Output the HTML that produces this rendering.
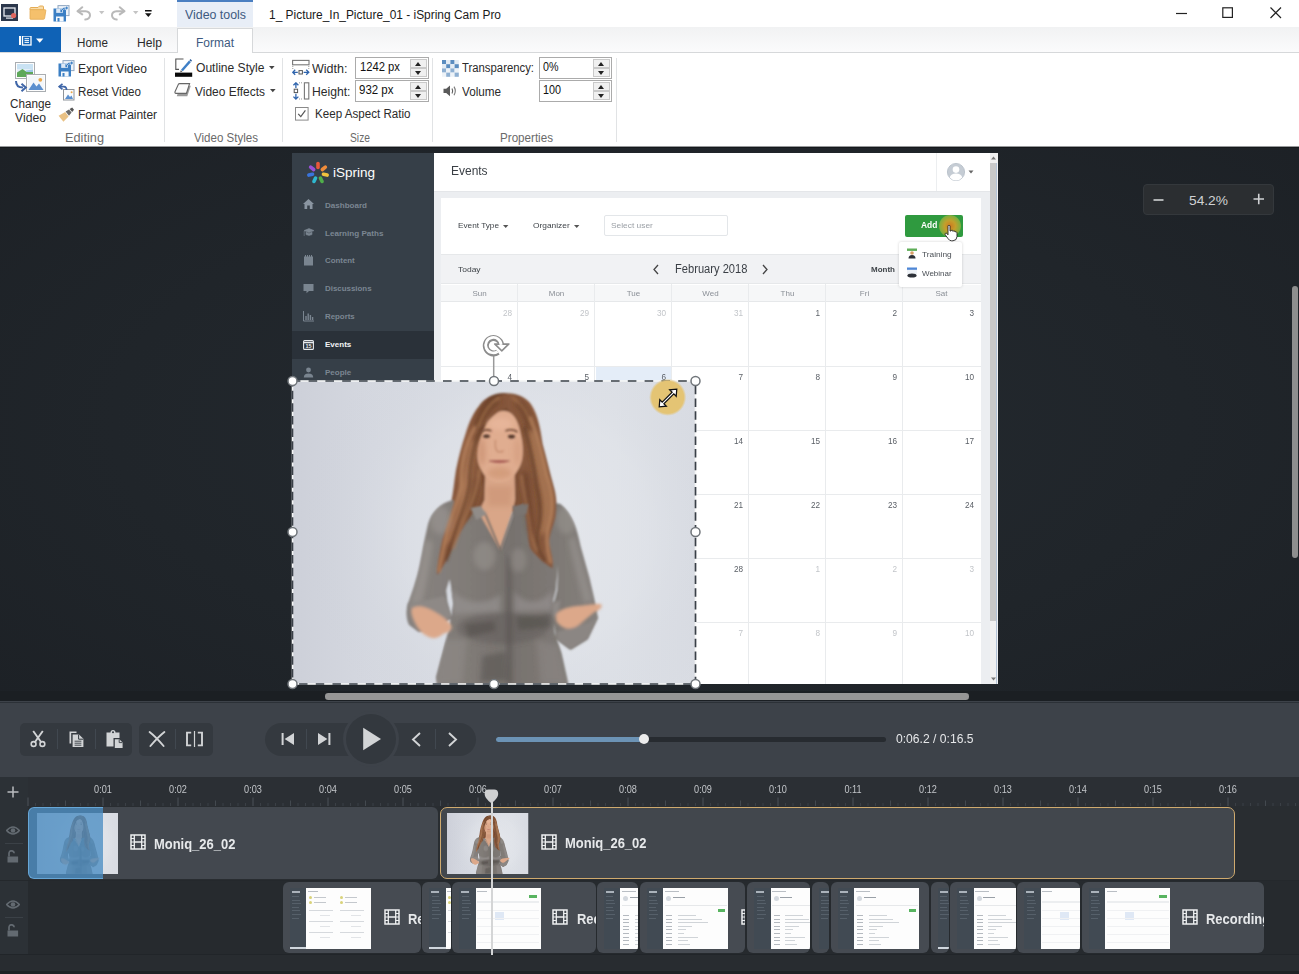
<!DOCTYPE html>
<html>
<head>
<meta charset="utf-8">
<title>iSpring Cam Pro</title>
<style>
*{box-sizing:border-box;margin:0;padding:0}
html,body{width:1299px;height:974px;overflow:hidden;background:#1f2328;font-family:"Liberation Sans",sans-serif;}
body{position:relative}
.abs{position:absolute}
.t{position:absolute;white-space:nowrap;line-height:1;transform-origin:0 50%}
/* ---------- title bar ---------- */
#title{position:absolute;left:0;top:0;width:1299px;height:27px;background:#fff}
#tabs{position:absolute;left:0;top:27px;width:1299px;height:26px;background:linear-gradient(#f1f2f3,#fbfbfc);border-bottom:1px solid #d6d8da}
#ribbon{position:absolute;left:0;top:53px;width:1299px;height:94px;background:#fff;border-bottom:1px solid #97999b}
.rt{font-size:12px;color:#2b2b2b}
.gl{font-size:12px;color:#6a6a6a}
.sep{position:absolute;top:58px;width:1px;height:84px;background:#e1e3e5}
.inp{position:absolute;height:22px;border:1px solid #ababab;background:#fff}
.spin{position:absolute;right:1px;top:1px;width:17px;height:18px}
.spin i{position:absolute;left:0;width:17px;height:9px;border:1px solid #c9c9c9;background:#f0f0f0}
.spin i:after{content:"";position:absolute;left:4px;top:2px;border:3.5px solid transparent}
.spin i.u{top:0}.spin i.u:after{border-bottom:4px solid #222;border-top:0}
.spin i.d{top:9px}.spin i.d:after{border-top:4px solid #222;border-bottom:0;top:2px}
/* ---------- stage ---------- */
#stage{position:absolute;left:0;top:147px;width:1299px;height:554px;background:radial-gradient(ellipse 75% 80% at 50% 50%,#242a30 0%,#20252a 55%,#1c2025 100%);overflow:hidden}

#pg{position:absolute;left:0;top:-147px;width:1299px;height:974px}
#vid{position:absolute;left:292px;top:153px;width:706px;height:531px;background:#fff;overflow:hidden}
#vin{position:absolute;left:-292px;top:-153px;width:1299px;height:974px;filter:blur(.55px)}
.sb{position:absolute;left:292px;top:153px;width:141.5px;height:531px;background:#363f48}
.mi{font-size:7.4px;font-weight:bold;color:#7b8692}
.cal{font-size:8px;color:#555}
.dn{font-size:8px;color:#8a8f96}
.dt{font-size:8.2px;color:#5a5f66;text-align:right;margin-left:-.5px}
.dt.o{color:#c2c5c9}
.vl{position:absolute;width:1px;background:#e9ebed;top:284px;height:400px}
.hl{position:absolute;height:1px;background:#e9ebed;left:441px;width:540px}
/* ---------- player ---------- */
#player{position:absolute;left:0;top:701px;width:1299px;height:76px;background:#3d4249}
#tl{position:absolute;left:0;top:777px;width:1299px;height:197px;background:#2a2e33}

.grp{position:absolute;top:20.5px;height:33px;background:#34393f;border-radius:5px}
.gdv{position:absolute;top:27px;width:1px;height:20px;background:#414850}
.ic{fill:none;stroke:#d2d4d6}
.rl{position:absolute;top:6.5px;font-size:10.5px;color:#c3c6ca;transform:scaleX(.87);width:40px;text-align:center;line-height:1;white-space:nowrap}
.clip{position:absolute;background:#464b52;border-radius:6px;overflow:hidden}
.c2{top:105px;height:71px}
.cn{transform:scaleX(.926);position:absolute;font-size:14px;font-weight:bold;color:#e6e8ea;white-space:nowrap;line-height:1;transform-origin:0 50%}
</style>
</head>
<body>
<svg width="0" height="0" style="position:absolute;left:-10px;top:-10px"><defs>
<filter id="b1" x="-10%" y="-10%" width="120%" height="120%"><feGaussianBlur stdDeviation=".9"/></filter>
<filter id="b2" x="-30%" y="-30%" width="160%" height="160%"><feGaussianBlur stdDeviation="2.6"/></filter>
<filter id="b3" x="-30%" y="-30%" width="160%" height="160%"><feGaussianBlur stdDeviation="1.5"/></filter>
<linearGradient id="hairg" x1="0" y1="0" x2="1" y2="0"><stop offset="0" stop-color="#7c4f36"/><stop offset=".25" stop-color="#8f5d40"/><stop offset=".5" stop-color="#6b432d"/><stop offset=".8" stop-color="#8d5c3f"/><stop offset="1" stop-color="#7d5037"/></linearGradient>
<linearGradient id="shirtg" x1="0" y1="0" x2="1" y2="0"><stop offset="0" stop-color="#888380"/><stop offset=".3" stop-color="#817c78"/><stop offset=".55" stop-color="#77726e"/><stop offset="1" stop-color="#85807c"/></linearGradient>
<linearGradient id="pbg" x1="0" y1="0" x2="1" y2="0"><stop offset="0" stop-color="#cdd0d9"/><stop offset=".2" stop-color="#d5d8e0"/><stop offset=".55" stop-color="#dcdfe6"/><stop offset=".8" stop-color="#dee1e7"/><stop offset="1" stop-color="#d9dce3"/></linearGradient><radialGradient id="pbg2" cx=".58" cy=".5" r=".5" gradientTransform="translate(.58 .5) scale(1.1 1.5) translate(-.58 -.5)"><stop offset="0" stop-color="#e8eaee" stop-opacity=".8"/><stop offset=".55" stop-color="#e2e5ea" stop-opacity=".4"/><stop offset="1" stop-color="#c8cdd6" stop-opacity="0"/></radialGradient><clipPath id="bodyclip"><path d="M506 393.2 C494 392 484 398 478.5 406 C472 414 468 424 465 434 C461 446 458 458 455.5 470 C453.5 482 453 492 450.5 503 C448 514 444 524 441.5 534 C439 546 436.5 560 436 576 C441 570 446 562 450 552 C455 540 462 528 468 520 L480 512 L524 512 C526 520 526 536 528 546 C534 556 544 564 552 569 C553 560 550 552 548.5 544 C548 536 552 528 555 518 C557 508 556 496 553 486 C549 472 546 458 542 444 C540 430 538 416 531 405 C526 397 516 393 506 393.2Z"/><path d="M470 506 L452 500 C440 503 431 512 427.5 524 C424 538 422 552 419 566 C416 580 411 594 407 605 C405 612 406 620 408.5 625 L418 632 L436 628 L451 618 L447 602 L446 590 L449 580 L452.5 604 L447.5 632 L442 653 L435.5 677 L436.5 686 L568 686 L567 680 L561 653 L554 632 L552 604 L555.5 590 L557.5 564 L556 590 L552 604 L552.5 618 L556 639 L570 649.5 L587 639 L597.5 618 L594.5 602 L589 578 L580 546 C577 530 572 514 560 504 L530 498 L514 510 L500 550 L484 512Z"/><path d="M485 468 L484 500 L478 512 L499.8 550 L512 512 L514.5 500 L514 468Z"/><path d="M503 411 C494 411 487 418 484.5 427 C480 436 476.5 446 477 456 C477.5 464 480 470 484 475 C488 480 493 482.5 498 482.5 C505 482.5 510 480 514 475 C518 470 521 464 522 456 C523 446 521 436 518.6 427 C516 418 512 411 503 411Z"/><path d="M507 394 C496 395 486 404 481 416 C476 428 472 440 468 452 C465 462 460 472 457 482 C455 492 455 500 452 510 C450 520 445 530 442 540 C439 552 437 564 436.5 575 C442 568 448 558 452 548 C457 536 463 526 469 518 C474 511 479 505 481 497 C483 488 481 478 478.5 470 C476 462 476 452 478 444 C480 434 484 426 489 420 C494 414 500 410 506 408Z"/><path d="M507 394 C516 394 526 400 531 410 C536 420 538 432 540 444 C543 458 547 472 551 484 C555 496 557 508 555 518 C552 528 548 536 548.5 544 C550 552 553 560 552 568.5 C545 564 536 557 530 549 C527 542 528 530 526 518 C525 508 522 498 520 490 C518 480 520 470 522 460 C524 448 522 436 519 427 C516 418 511 412 506 408Z"/></clipPath><symbol id="wm" viewBox="292.5 381 403 303" preserveAspectRatio="none"><rect x="292.5" y="381" width="403" height="303" fill="url(#pbg)"/><rect x="292.5" y="381" width="403" height="303" fill="url(#pbg2)"/>
<g filter="url(#b1)">
<!-- hair back mass -->
<path d="M506 393.2 C494 392 484 398 478.5 406 C472 414 468 424 465 434 C461 446 458 458 455.5 470 C453.5 482 453 492 450.5 503 C448 514 444 524 441.5 534 C439 546 436.5 560 436 576 C441 570 446 562 450 552 C455 540 462 528 468 520 L480 512 L524 512 C526 520 526 536 528 546 C534 556 544 564 552 569 C553 560 550 552 548.5 544 C548 536 552 528 555 518 C557 508 556 496 553 486 C549 472 546 458 542 444 C540 430 538 416 531 405 C526 397 516 393 506 393.2Z" fill="url(#hairg)"/>
<!-- shirt: torso + arms -->
<path d="M470 506 L452 500 C440 503 431 512 427.5 524 C424 538 422 552 419 566 C416 580 411 594 407 605 C405 612 406 620 408.5 625 L418 632 L436 628 L451 618 L447 602 L446 590 L449 580 L452.5 604 L447.5 632 L442 653 L435.5 677 L436.5 686 L568 686 L567 680 L561 653 L554 632 L552 604 L555.5 590 L557.5 564 L556 590 L552 604 L552.5 618 L556 639 L570 649.5 L587 639 L597.5 618 L594.5 602 L589 578 L580 546 C577 530 572 514 560 504 L530 498 L514 510 L500 550 L484 512Z" fill="url(#shirtg)"/>
<!-- gap between arms & torso shows bg -->
<path d="M446.2 590 L449.2 579.5 L452.6 604 L450.5 616 L447 603Z" fill="#d6d9e0"/>
<path d="M555.6 590 L557.6 566 L556.6 590 L553 603.5 L552.6 600Z" fill="#dcdfe5"/>
<!-- neck / chest -->
<path d="M485 468 L484 500 L478 512 L499.8 550 L512 512 L514.5 500 L514 468Z" fill="#d9a688"/>
<!-- face -->
<path d="M503 411 C494 411 487 418 484.5 427 C480 436 476.5 446 477 456 C477.5 464 480 470 484 475 C488 480 493 482.5 498 482.5 C505 482.5 510 480 514 475 C518 470 521 464 522 456 C523 446 521 436 518.6 427 C516 418 512 411 503 411Z" fill="#e0ad90"/>
<!-- hair framing: left side over forehead & down -->
<path d="M507 394 C496 395 486 404 481 416 C476 428 472 440 468 452 C465 462 460 472 457 482 C455 492 455 500 452 510 C450 520 445 530 442 540 C439 552 437 564 436.5 575 C442 568 448 558 452 548 C457 536 463 526 469 518 C474 511 479 505 481 497 C483 488 481 478 478.5 470 C476 462 476 452 478 444 C480 434 484 426 489 420 C494 414 500 410 506 408Z" fill="#85563b"/>
<!-- hair right side -->
<path d="M507 394 C516 394 526 400 531 410 C536 420 538 432 540 444 C543 458 547 472 551 484 C555 496 557 508 555 518 C552 528 548 536 548.5 544 C550 552 553 560 552 568.5 C545 564 536 557 530 549 C527 542 528 530 526 518 C525 508 522 498 520 490 C518 480 520 470 522 460 C524 448 522 436 519 427 C516 418 511 412 506 408Z" fill="#87583c"/>
</g>
<g clip-path="url(#bodyclip)"><g filter="url(#b2)">
<!-- hair highlights / shadows -->
<path d="M470 440 C465 460 460 480 458 500 C455 516 448 530 444 546 L452 540 C458 524 464 512 468 498 C472 480 472 460 476 442Z" fill="#b07c58" opacity=".8"/>
<path d="M534 430 C540 452 546 474 550 492 C553 506 550 520 546 532 L538 536 C542 520 544 506 540 490 C536 472 530 452 528 432Z" fill="#ad7a56" opacity=".8"/>
<path d="M492 398 C484 404 478 414 474 426 L482 424 C486 414 492 406 500 402Z" fill="#6a4029" opacity=".9"/>
<path d="M520 400 C528 408 532 420 534 432 L526 428 C524 418 520 410 514 404Z" fill="#6a4029" opacity=".7"/>
<path d="M522 470 C522 490 526 510 528 530 L534 540 C534 520 530 496 528 474Z" fill="#6b412a" opacity=".8"/>
<path d="M478 478 C478 494 474 508 468 518 L462 522 C468 508 472 494 474 478Z" fill="#6b412a" opacity=".7"/>
<!-- shirt folds -->
<path d="M507 556 L509.6 556 L510.6 684 L507.4 684Z" fill="#4e4a47" opacity=".75"/>
<path d="M464 624 L494 621 L495 631 L468 637Z" fill="#4d4946" opacity=".6"/>
<path d="M516 617 L550 614 L551 627 L518 630Z" fill="#504c49" opacity=".6"/>
<path d="M482 656 L505 652 L506 680 L480 682Z" fill="#56524f" opacity=".55"/>
<path d="M452 590 C462 604 486 606 500 594 L500 612 L452 614Z" fill="#969190" opacity=".7"/>
<path d="M514 592 C526 606 542 604 552 590 L552 610 L514 612Z" fill="#969190" opacity=".65"/>
<path d="M440 640 L466 640 L462 684 L436 684Z" fill="#8f8a87" opacity=".6"/>
<path d="M536 640 L558 646 L566 684 L540 684Z" fill="#8f8a87" opacity=".5"/>
<path d="M424 540 C422 560 416 584 410 604 L420 606 C426 586 430 562 432 542Z" fill="#9a9592" opacity=".7"/>
<path d="M574 536 C580 556 586 580 592 600 L584 604 C578 584 572 560 568 540Z" fill="#9a9592" opacity=".6"/>
<ellipse cx="502" cy="628" rx="46" ry="16" fill="#55514e" opacity=".35"/>
<ellipse cx="484" cy="556" rx="11" ry="14" fill="#a09b97" opacity=".45"/>
<ellipse cx="518" cy="560" rx="8" ry="12" fill="#a09b97" opacity=".4"/>
<ellipse cx="440" cy="520" rx="10" ry="14" fill="#a09b97" opacity=".5"/>
<ellipse cx="566" cy="520" rx="10" ry="14" fill="#a09b97" opacity=".45"/>
<!-- face shading -->
<ellipse cx="499" cy="473" rx="12" ry="6" fill="#cf9878" opacity=".8"/>
<ellipse cx="481.5" cy="452" rx="3.5" ry="14" fill="#c88f70" opacity=".7"/>
<ellipse cx="517" cy="452" rx="3.5" ry="14" fill="#d09a7c" opacity=".6"/>
<ellipse cx="500" cy="424" rx="12" ry="6" fill="#e8b89c" opacity=".8"/>
<path d="M486 486 L512 486 L510 506 L488 506Z" fill="#cc9676" opacity=".7"/>
</g></g>
<g filter="url(#b3)">
<!-- cuffs -->
<path d="M407.5 604 L444 596 L451 616 L438 626 L412 614Z" fill="#8e8986"/>
<path d="M552 604 L560 600 L558 612 L553 618Z" fill="#8e8986"/>
<path d="M556 632 L590 622 L597 616 L587 639 L570 649.5 L557 640Z" fill="#8b8683"/>
<!-- hands -->
<path d="M411.5 608.5 C416 604.5 424 606 432 610.5 C440 615 448 620 451 626 C452 630 448 633 443 633.5 C440 637 434 639.5 430 637.5 C424 636 418 630 415 624 C412 618 409.5 612 411.5 608.5Z" fill="#dca88a"/>
<path d="M555.5 615 C558 610 566 607 576 606 C586 605 594 603.5 600 604 C603 606 600 610 594 612 C590 615 586 619 582 622 C578 626 572 629 567 628.5 C562 628 557 624 555.5 620Z" fill="#dca88a"/>
</g>
<g clip-path="url(#bodyclip)"><g filter="url(#b3)" fill="none" stroke-linecap="round">
<path d="M474 428 C463 448 460 468 461 486 C458 500 451 515 447 530 C444 545 440 560 438.5 571" stroke="#b98660" stroke-width="3.6" opacity=".75"/>
<path d="M482 426 C472 446 469 466 469 484 C467 500 460 514 456 528 C452 540 448 552 446 560" stroke="#603b28" stroke-width="3.2" opacity=".6"/>
<path d="M479 470 C477 486 473 500 467 512 C461 524 457 536 453 548" stroke="#ad7b55" stroke-width="2.6" opacity=".7"/>
<path d="M530 418 C538 438 542 458 546 476 C552 492 553 508 549 522 C545 534 546 548 550 562" stroke="#b98660" stroke-width="3.6" opacity=".75"/>
<path d="M524 428 C530 448 534 468 536 486 C540 502 541 518 537 532 C535 542 538 552 544 560" stroke="#603b28" stroke-width="3.2" opacity=".6"/>
<path d="M521 476 C523 492 527 508 529 524 C530 534 532 542 536 550" stroke="#ad7b55" stroke-width="2.4" opacity=".6"/>
<path d="M498 398 C488 404 482 414 478 426" stroke="#a8764f" stroke-width="2.6" opacity=".7"/>
<path d="M512 398 C522 404 528 414 531 426" stroke="#a8764f" stroke-width="2.4" opacity=".6"/>
</g></g>
<g filter="url(#b1)">
<!-- eyes / brows / nose / mouth -->
<path d="M481 431.5 Q485.5 428.5 491 431" fill="none" stroke="#6a4430" stroke-width="1.6"/>
<path d="M505 431 Q511 428 517 432" fill="none" stroke="#6a4430" stroke-width="1.6"/>
<ellipse cx="486" cy="436.2" rx="3.4" ry="1.7" fill="#4b3327"/>
<ellipse cx="511" cy="436.6" rx="3.6" ry="1.8" fill="#4b3327"/>
<path d="M495 440 Q494 449 497 451.5 Q500 452.5 503 451" fill="none" stroke="#c58d70" stroke-width="1.4"/>
<path d="M488.5 461 Q498.5 459 509 461 Q499 465.5 488.5 461Z" fill="#b86c62"/>
<path d="M488.5 461 Q498.5 462 509 461" fill="none" stroke="#8a4a44" stroke-width=".8"/>
<path d="M484 512 L499.8 550 L513 512" fill="none" stroke="#6e6965" stroke-width="1.6"/>
<path d="M470 508 L480 506 L486 514 L476 520Z" fill="#918c88"/>
<path d="M512 506 L528 504 L526 514 L514 516Z" fill="#7a7571"/>
</g>
</symbol></defs></svg>
<div id="title">
<!-- app icon -->
<svg class="abs" style="left:1px;top:4px" width="18" height="18" viewBox="0 0 18 18"><rect width="17" height="17" fill="#2c384c"/><rect x="3" y="4" width="11" height="8" fill="none" stroke="#e8ecf2" stroke-width="1.3"/><rect x="5" y="13.5" width="7" height="1.2" fill="#e8ecf2"/><circle cx="12.6" cy="11.6" r="2.6" fill="#e0665e"/></svg>
<!-- folder -->
<svg class="abs" style="left:29px;top:5px" width="18" height="16" viewBox="0 0 18 16"><path d="M1 3.5 Q1 2.5 2 2.5 L9 2.5 L10.5 1 L13.5 1 Q14.5 1 14.5 2 L14.5 5 L1 5Z" fill="#f9dca8" stroke="#e5ac55" stroke-width="1"/><path d="M1 14 L1 5.5 Q1 4.7 2 4.7 L16 4.7 Q17 4.7 16.8 5.7 L15.6 13.3 Q15.4 14.3 14.4 14.3 L1.5 14.3Z" fill="#f5c06c" stroke="#e5ac55" stroke-width=".8"/></svg>
<!-- save -->
<svg class="abs" style="left:53px;top:5px" width="17" height="17" viewBox="0 0 17 17"><rect x="5" y=".6" width="11" height="10" fill="#eef3f9" stroke="#8fa6c0" stroke-width="1"/><path d="M.5 3.5 L11.5 3.5 L13 5 L13 16.5 L.5 16.5Z" fill="#3b7fc4"/><rect x="3.2" y="3.5" width="6.6" height="4.4" fill="#dce8f5"/><rect x="7.4" y="4.2" width="1.6" height="3" fill="#3b7fc4"/><rect x="3" y="11.5" width="7.6" height="5" fill="#f4f8fc"/><rect x="4.5" y="13" width="2" height="3.5" fill="#3b7fc4"/><path d="M8.5 4.5 Q10 1.8 13 2.2 L13 .8 L15.6 3 L13 5.2 L13 3.8 Q10.5 3.5 9.6 5.5Z" fill="#3b7fc4" stroke="#eef3f9" stroke-width=".5"/></svg>
<!-- undo -->
<svg class="abs" style="left:76px;top:6px" width="16" height="15" viewBox="0 0 16 15"><path d="M6.2 1.2 L1.5 5.2 L6.2 8.4" fill="none" stroke="#b9b9b9" stroke-width="2" stroke-linecap="round" stroke-linejoin="round"/><path d="M2.2 5.2 L9.5 5.2 Q14 5.6 14 9.3 Q14 13 9.3 13.6" fill="none" stroke="#b9b9b9" stroke-width="2" stroke-linecap="round"/></svg>
<svg class="abs" style="left:99px;top:11px" width="6" height="4" viewBox="0 0 6 4"><path d="M0 0 L5.4 0 L2.7 3.2Z" fill="#c4c4c4"/></svg>
<!-- redo -->
<svg class="abs" style="left:110px;top:6px" width="16" height="15" viewBox="0 0 16 15"><g transform="translate(16,0) scale(-1,1)"><path d="M6.2 1.2 L1.5 5.2 L6.2 8.4" fill="none" stroke="#b9b9b9" stroke-width="2" stroke-linecap="round" stroke-linejoin="round"/><path d="M2.2 5.2 L9.5 5.2 Q14 5.6 14 9.3 Q14 13 9.3 13.6" fill="none" stroke="#b9b9b9" stroke-width="2" stroke-linecap="round"/></g></svg>
<svg class="abs" style="left:133px;top:11px" width="6" height="4" viewBox="0 0 6 4"><path d="M0 0 L5.4 0 L2.7 3.2Z" fill="#c4c4c4"/></svg>
<!-- customize -->
<svg class="abs" style="left:145px;top:10px" width="7" height="8" viewBox="0 0 7 8"><rect x="0" y="0" width="6.6" height="1.5" fill="#111"/><path d="M0 3.2 L6.6 3.2 L3.3 7Z" fill="#111"/></svg>
<!-- video tools context tab -->
<div class="abs" style="left:177px;top:0;width:76px;height:28px;background:#e8eef7;border-top:2px solid #4a7fc1"></div>
<span class="t" id="t_vt" style="transform:scaleX(0.990);left:185px;top:9.25px;font-size:12.5px;color:#3d5a80">Video tools</span>
<span class="t" id="t_ttl" style="transform:scaleX(0.954);left:269px;top:9.25px;font-size:12.5px;color:#1a1a1a">1_ Picture_In_Picture_01 - iSpring Cam Pro</span>
<!-- window buttons -->
<svg class="abs" style="left:1176px;top:7px" width="12" height="12" viewBox="0 0 12 12"><path d="M0 6.5 L11 6.5" stroke="#222" stroke-width="1.2"/></svg>
<svg class="abs" style="left:1222px;top:7px" width="12" height="12" viewBox="0 0 12 12"><rect x=".8" y=".8" width="9.6" height="9.6" fill="none" stroke="#222" stroke-width="1.2"/></svg>
<svg class="abs" style="left:1270px;top:7px" width="12" height="12" viewBox="0 0 12 12"><path d="M.5 .5 L11 11 M11 .5 L.5 11" stroke="#222" stroke-width="1.2"/></svg>
</div>
<div id="tabs">
<div class="abs" style="left:0;top:0;width:61px;height:25px;background:#0f62b6"></div>
<svg class="abs" style="left:19px;top:9px" width="26" height="10" viewBox="0 0 26 10"><rect x="0" y="0" width="2" height="9" fill="#fff"/><rect x="3.5" y="0" width="8.5" height="9" fill="none" stroke="#fff" stroke-width="1.3"/><path d="M5.5 2.7 H10 M5.5 4.6 H10 M5.5 6.4 H10" stroke="#fff" stroke-width="1"/><path d="M17 2.6 L24.4 2.6 L20.7 6.8Z" fill="#fff"/></svg>
<span class="t rt" id="t_home" style="transform:scaleX(0.930);left:77px;top:9.50px;font-size:12.5px">Home</span>
<span class="t rt" id="t_help" style="transform:scaleX(0.972);left:137px;top:9.50px;font-size:12.5px">Help</span>
<div class="abs" style="left:177px;top:1px;width:76px;height:26px;background:#fff;border:1px solid #d6d8da;border-bottom:0"></div>
<span class="t" id="t_fmt" style="transform:scaleX(0.960);left:196px;top:9.50px;font-size:12.5px;color:#3d5a80">Format</span>
</div>
<div id="ribbon">
<svg class="abs" style="left:14px;top:7.5px" width="34" height="34" viewBox="0 0 34 34">
<rect x="1.5" y="1.5" width="19" height="16" fill="#fdfdfd" stroke="#a9adb1" stroke-width="1"/><rect x="3" y="3" width="16" height="13" fill="#e3eef7"/><path d="M3 16 L3 11.5 L8.5 8 L12 10.5 L19 9 L19 16Z" fill="#5ea85a"/><path d="M3 8 L19 8 L19 3 L3 3Z" fill="#c9e2f3"/><path d="M12 9.5 L19 8.6 L19 11 L12 11Z" fill="#9fc7e6"/>
<rect x="12.5" y="13.5" width="19" height="17" fill="#fdfdfd" stroke="#a9adb1" stroke-width="1"/><rect x="14" y="15" width="16" height="14" fill="#f4f7fa"/><path d="M14.5 29 L19.5 21.5 L22.5 25.5 L25 22.5 L29.5 29Z" fill="#5b8fce"/><circle cx="26.3" cy="18.8" r="1.9" fill="#eaa84a"/>
<path d="M2 20 Q2 26.5 9 26.5" fill="none" stroke="#3f66a8" stroke-width="2"/><path d="M7.5 22.8 L11.8 26.5 L7.5 30.2" fill="none" stroke="#3f66a8" stroke-width="2"/>
</svg>
<span class="t rt" id="t_change" style="transform:scaleX(0.936);left:10px;top:45.45px;font-size:12.5px;">Change</span>
<span class="t rt" id="t_video" style="transform:scaleX(0.976);left:15px;top:58.95px;font-size:12.5px;">Video</span>
<svg class="abs" style="left:58px;top:7px" width="17" height="17" viewBox="0 0 17 17"><rect x="5" y=".6" width="11" height="10" fill="#eef3f9" stroke="#8fa6c0" stroke-width="1"/><path d="M.5 3.5 L11.5 3.5 L13 5 L13 16.5 L.5 16.5Z" fill="#3b7fc4"/><rect x="3.2" y="3.5" width="6.6" height="4.4" fill="#dce8f5"/><rect x="7.4" y="4.2" width="1.6" height="3" fill="#3b7fc4"/><rect x="3" y="11.5" width="7.6" height="5" fill="#f4f8fc"/><rect x="4.5" y="13" width="2" height="3.5" fill="#3b7fc4"/><path d="M8.5 4.5 Q10 1.8 13 2.2 L13 .8 L15.6 3 L13 5.2 L13 3.8 Q10.5 3.5 9.6 5.5Z" fill="#3b7fc4" stroke="#eef3f9" stroke-width=".5"/></svg>
<span class="t rt" id="t_export" style="transform:scaleX(0.967);left:78px;top:9.95px;font-size:12.5px;">Export Video</span>
<svg class="abs" style="left:58px;top:30px" width="17" height="18" viewBox="0 0 17 18"><rect x="5.5" y="6.5" width="10.5" height="10.5" fill="#fbfcfd" stroke="#8e9399" stroke-width="1"/><path d="M7 16 L10 11.5 L12 14 L13.5 12.5 L15 16Z" fill="#5b8fce"/><circle cx="13.6" cy="9.2" r="1" fill="#eaa84a"/><path d="M4.5 .8 L1.2 3.6 L4.5 6.4" fill="none" stroke="#3f66a8" stroke-width="1.6"/><path d="M1.6 3.6 L6 3.6 Q8.6 3.8 8.6 7" fill="none" stroke="#3f66a8" stroke-width="1.6"/></svg>
<span class="t rt" id="t_reset" style="transform:scaleX(0.928);left:78px;top:33.20px;font-size:12.5px;">Reset Video</span>
<svg class="abs" style="left:58px;top:53.5px" width="18" height="17" viewBox="0 0 18 17"><path d="M.6 8.8 L7.2 5 L10.6 9.4 L5.4 14.8Z" fill="#e9c184"/><path d="M7.6 4.4 L11 2.4 L13.6 5.6 L11 8.8Z" fill="#6b6b6b"/><path d="M11.6 1.9 L14.2 .4 L16 2.8 L14.2 5Z" fill="#555"/></svg>
<span class="t rt" id="t_painter" style="transform:scaleX(0.956);left:78px;top:56.20px;font-size:12.5px;">Format Painter</span>
<span class="t gl" id="t_editing" style="transform:scaleX(1.020);left:65px;top:78.80px;font-size:12.5px;">Editing</span>
<div class="sep" style="left:164px;top:5px"></div>
<svg class="abs" style="left:175px;top:5px" width="18" height="19" viewBox="0 0 18 19"><path d="M8.5 1 L.8 1 L.8 11.4 L4 11.4" fill="none" stroke="#555" stroke-width="1.1"/><path d="M6 11.8 L14 2.6 L15.8 4.2 L7.8 13.2Z" fill="#3f7fc6"/><path d="M14.4 2.2 L15.4 1.1 L17 2.6 L16.1 3.7Z" fill="#2f5f9a"/><path d="M5.8 12.2 L5.2 14.2 L7.4 13.5Z" fill="#444"/><rect x="0" y="14.6" width="17.2" height="4.2" fill="#0a0a0a"/></svg>
<span class="t rt" id="t_outline" style="transform:scaleX(0.966);left:195.5px;top:9.45px;font-size:12.5px;">Outline Style</span>
<svg class="abs" style="left:269px;top:13px" width="6" height="4" viewBox="0 0 6 4"><path d="M0 0 L5.6 0 L2.8 3.2Z" fill="#444"/></svg>
<svg class="abs" style="left:174px;top:30px" width="18" height="14" viewBox="0 0 18 14"><path d="M5.5 2 L16 2 L12.5 12.5 L2 12.5Z" fill="#9a9a9a" transform="translate(.8,.8)"/><path d="M4.5 1 Q5 .6 5.6 .6 L15.6 .6 L12.4 10.4 L2 10.4 Q.6 10.2 1 8.8Z" fill="#fcfcfc" stroke="#666" stroke-width="1.1"/></svg>
<span class="t rt" id="t_effects" style="transform:scaleX(0.956);left:195px;top:32.95px;font-size:12.5px;">Video Effects</span>
<svg class="abs" style="left:270px;top:36px" width="6" height="4" viewBox="0 0 6 4"><path d="M0 0 L5.6 0 L2.8 3.2Z" fill="#444"/></svg>
<span class="t gl" id="t_vstyles" style="transform:scaleX(0.924);left:193.5px;top:78.80px;font-size:12.5px;">Video Styles</span>
<div class="sep" style="left:282px;top:5px"></div>
<svg class="abs" style="left:292px;top:6px" width="18" height="18" viewBox="0 0 18 18"><rect x=".6" y="1.4" width="16.4" height="4.4" fill="#fff" stroke="#777" stroke-width="1.1"/><path d="M.8 7 V11 M16.8 7 V11" stroke="#999" stroke-width="1" stroke-dasharray="1 1"/><rect x="7" y="11.6" width="3.4" height="3.4" fill="#fff" stroke="#555" stroke-width="1"/><path d="M5.8 13.3 H.8 M3.2 10.8 L.8 13.3 L3.2 15.8 M11.6 13.3 H16.8 M14.2 10.8 L16.8 13.3 L14.2 15.8" fill="none" stroke="#2f64ad" stroke-width="1.3"/></svg>
<span class="t rt" id="t_width" style="transform:scaleX(1.002);left:312px;top:9.50px;font-size:12.5px;">Width:</span>
<svg class="abs" style="left:292px;top:29px" width="18" height="18" viewBox="0 0 18 18"><rect x="12.4" y=".8" width="4.4" height="16.2" fill="#fff" stroke="#777" stroke-width="1.1"/><path d="M7 .8 H11 M7 17 H11" stroke="#999" stroke-width="1" stroke-dasharray="1 1"/><rect x="2.2" y="7.2" width="3.4" height="3.4" fill="#fff" stroke="#555" stroke-width="1"/><path d="M3.9 6 V.8 M1.4 3.2 L3.9 .8 L6.4 3.2 M3.9 11.8 V17 M1.4 14.6 L3.9 17 L6.4 14.6" fill="none" stroke="#2f64ad" stroke-width="1.3"/></svg>
<span class="t rt" id="t_height" style="transform:scaleX(0.972);left:312px;top:32.50px;font-size:12.5px;">Height:</span>
<div class="inp" style="left:355px;top:4px;width:74px"><span class="t" id="t_w" style="transform:scaleX(0.899);left:3.5px;top:2.50px;font-size:12.5px;color:#111">1242 px</span><div class="spin"><i class="u"></i><i class="d"></i></div></div>
<div class="inp" style="left:355px;top:27px;width:74px"><span class="t" id="t_h" style="transform:scaleX(0.919);left:3px;top:2.50px;font-size:12.5px;color:#111">932 px</span><div class="spin"><i class="u"></i><i class="d"></i></div></div>
<svg class="abs" style="left:294.5px;top:54px" width="14" height="14" viewBox="0 0 14 14"><rect x=".5" y=".5" width="12.6" height="12.6" fill="#fff" stroke="#8a8a8a" stroke-width="1"/><path d="M3.2 6.8 L5.8 9.6 L10.4 3.4" fill="none" stroke="#555" stroke-width="1.2"/></svg>
<span class="t rt" id="t_keep" style="transform:scaleX(0.929);left:315px;top:55.30px;font-size:12.5px;">Keep Aspect Ratio</span>
<span class="t gl" id="t_size" style="transform:scaleX(0.822);left:350px;top:79.00px;font-size:12.5px;">Size</span>
<div class="sep" style="left:432px;top:5px"></div>
<svg class="abs" style="left:442px;top:7px" width="17" height="17" viewBox="0 0 17 17"><rect x="0.0" y="0.0" width="4.2" height="4.2" fill="#5b8cbf"/><rect x="4.2" y="0.0" width="4.2" height="4.2" fill="#e4ecf4"/><rect x="8.4" y="0.0" width="4.2" height="4.2" fill="#5b8cbf"/><rect x="12.6" y="0.0" width="4.2" height="4.2" fill="#e4ecf4"/><rect x="0.0" y="4.2" width="4.2" height="4.2" fill="#e4ecf4"/><rect x="4.2" y="4.2" width="4.2" height="4.2" fill="#5b8cbf"/><rect x="8.4" y="4.2" width="4.2" height="4.2" fill="#e4ecf4"/><rect x="12.6" y="4.2" width="4.2" height="4.2" fill="#5b8cbf"/><rect x="0.0" y="8.4" width="4.2" height="4.2" fill="#8fb0d2"/><rect x="4.2" y="8.4" width="4.2" height="4.2" fill="#eef3f8"/><rect x="8.4" y="8.4" width="4.2" height="4.2" fill="#8fb0d2"/><rect x="12.6" y="8.4" width="4.2" height="4.2" fill="#eef3f8"/><rect x="0.0" y="12.6" width="4.2" height="4.2" fill="#eef3f8"/><rect x="4.2" y="12.6" width="4.2" height="4.2" fill="#8fb0d2"/><rect x="8.4" y="12.6" width="4.2" height="4.2" fill="#eef3f8"/><rect x="12.6" y="12.6" width="4.2" height="4.2" fill="#8fb0d2"/></svg>
<span class="t rt" id="t_transp" style="transform:scaleX(0.906);left:461.5px;top:9.00px;font-size:12.5px;">Transparency:</span>
<svg class="abs" style="left:443px;top:32px" width="15" height="12" viewBox="0 0 15 12"><path d="M.5 3.8 H3.2 L7 .6 V11.2 L3.2 8 H.5Z" fill="#5a5a5a"/><path d="M9 3.4 Q10.4 5.9 9 8.4" fill="none" stroke="#5a5a5a" stroke-width="1.1"/><path d="M11 1.6 Q13.6 5.9 11 10.2" fill="none" stroke="#7a7a7a" stroke-width="1.1"/></svg>
<span class="t rt" id="t_volume" style="transform:scaleX(0.938);left:461.5px;top:32.50px;font-size:12.5px;">Volume</span>
<div class="inp" style="left:539px;top:4px;width:73px"><span class="t" id="t_tr" style="transform:scaleX(0.857);left:2.5px;top:2.50px;font-size:12.5px;color:#111">0%</span><div class="spin"><i class="u"></i><i class="d"></i></div></div>
<div class="inp" style="left:539px;top:27px;width:73px"><span class="t" id="t_vol" style="transform:scaleX(0.863);left:3px;top:2.50px;font-size:12.5px;color:#111">100</span><div class="spin"><i class="u"></i><i class="d"></i></div></div>
<span class="t gl" id="t_props" style="transform:scaleX(0.930);left:500px;top:78.60px;font-size:12.5px;">Properties</span>
<div class="sep" style="left:616px;top:5px"></div>
</div>
<div id="stage"><div class="abs" style="left:0;top:0;width:1299px;height:1px;background:#15181b"></div><div id="pg">
<div id="vid"><div id="vin">
<div class="sb"></div>
<div class="abs" style="left:292px;top:331px;width:141.5px;height:28px;background:#2a3139"></div>
<svg class="abs" style="left:306px;top:161px" width="24" height="24" viewBox="-12 -12 24 24"><rect x="-1.8" y="-11.2" width="3.6" height="7.4" rx="1.8" fill="#e8583c" transform="rotate(0.0)"/><rect x="-1.8" y="-11.2" width="3.6" height="7.4" rx="1.8" fill="#f08c3a" transform="rotate(51.4)"/><rect x="-1.8" y="-11.2" width="3.6" height="7.4" rx="1.8" fill="#f2c13e" transform="rotate(102.9)"/><rect x="-1.8" y="-11.2" width="3.6" height="7.4" rx="1.8" fill="#4fae4a" transform="rotate(154.3)"/><rect x="-1.8" y="-11.2" width="3.6" height="7.4" rx="1.8" fill="#2fb8d0" transform="rotate(205.7)"/><rect x="-1.8" y="-11.2" width="3.6" height="7.4" rx="1.8" fill="#3a74dc" transform="rotate(257.1)"/><rect x="-1.8" y="-11.2" width="3.6" height="7.4" rx="1.8" fill="#9a50d6" transform="rotate(308.6)"/></svg>
<span class="t" id="v_logo" style="transform:scaleX(1.002);left:333px;top:165.60px;font-size:13.5px;color:#fff">iSpring</span>
<svg class="abs" style="left:302.5px;top:198.5px" width="12" height="11" viewBox="0 0 12 11"><path d="M0 5 L5.5 0 L11 5 L9.5 5 L9.5 10 L6.8 10 L6.8 6.5 L4.2 6.5 L4.2 10 L1.5 10 L1.5 5Z" fill="#8a95a1"/></svg><span class="t mi" id="v_dash" style="transform:scaleX(1.088);left:325px;top:201.70px;color:#7b8692">Dashboard</span>
<svg class="abs" style="left:302.5px;top:226.5px" width="12" height="11" viewBox="0 0 12 11"><path d="M1 3.6 L6 1.6 L11 3.6 L6 5.6Z M3 5.2 V7.6 Q6 9.2 9 7.6 V5.2 L6 6.5Z M1.2 4 V9" fill="#7a8590" stroke="#7a8590" stroke-width=".6"/></svg><span class="t mi" id="v_lear" style="transform:scaleX(1.094);left:325px;top:229.60px;color:#7b8692">Learning Paths</span>
<svg class="abs" style="left:302.5px;top:254.5px" width="12" height="11" viewBox="0 0 12 11"><rect x="1" y="1.5" width="9" height="9" fill="#7a8590"/><path d="M2.5 0 V2 M4.5 0 V2 M6.5 0 V2 M8.5 0 V2" stroke="#7a8590" stroke-width="1"/></svg><span class="t mi" id="v_cont" style="transform:scaleX(1.064);left:325px;top:257.30px;color:#7b8692">Content</span>
<svg class="abs" style="left:302.5px;top:282.5px" width="12" height="11" viewBox="0 0 12 11"><path d="M.5 1 H10.5 V8 H6 L3.5 10.2 V8 H.5Z" fill="#7a8590"/></svg><span class="t mi" id="v_disc" style="transform:scaleX(1.070);left:325px;top:285.30px;color:#7b8692">Discussions</span>
<svg class="abs" style="left:302.5px;top:310.5px" width="12" height="11" viewBox="0 0 12 11"><path d="M.5 0 V10 H11" fill="none" stroke="#7a8590" stroke-width="1"/><path d="M3 9 V5 M5.2 9 V2.5 M7.4 9 V4 M9.6 9 V6" stroke="#7a8590" stroke-width="1.4"/></svg><span class="t mi" id="v_repo" style="transform:scaleX(1.063);left:325px;top:313.30px;color:#7b8692">Reports</span>
<svg class="abs" style="left:302.5px;top:338.5px" width="12" height="11" viewBox="0 0 12 11"><rect x=".6" y="1.6" width="9.8" height="8.8" rx="1" fill="none" stroke="#e8ebee" stroke-width="1.1"/><path d="M.6 3.6 H10.4" stroke="#e8ebee" stroke-width="1.4"/><text x="5.5" y="9" font-size="5.5" font-family="Liberation Sans" font-weight="bold" fill="#e8ebee" text-anchor="middle">15</text></svg><span class="t mi" id="v_even" style="transform:scaleX(1.085);left:325px;top:341.30px;color:#f2f4f6">Events</span>
<svg class="abs" style="left:302.5px;top:366.5px" width="12" height="11" viewBox="0 0 12 11"><circle cx="5.5" cy="3" r="2.4" fill="#7a8590"/><path d="M.8 10.5 Q.8 6.4 5.5 6.4 Q10.2 6.4 10.2 10.5Z" fill="#7a8590"/></svg><span class="t mi" id="v_peop" style="transform:scaleX(1.085);left:325px;top:369.30px;color:#7b8692">People</span>
<div class="abs" style="left:433.5px;top:153px;width:556px;height:38.5px;background:#fff;border-bottom:1px solid #e4e6e9"></div>
<span class="t" id="v_events" style="transform:scaleX(0.998);left:451px;top:165.00px;font-size:12px;color:#3a3f45">Events</span>
<div class="abs" style="left:936px;top:153px;width:1px;height:38px;background:#eceef0"></div>
<svg class="abs" style="left:946px;top:162px" width="30" height="20" viewBox="0 0 30 20"><circle cx="10" cy="10" r="8.6" fill="#c5ccd4"/><circle cx="10" cy="10" r="8.6" fill="none" stroke="#b4bcc6" stroke-width=".8"/><circle cx="10" cy="7.6" r="3.3" fill="#fff"/><path d="M3.6 15.6 Q5 11.6 10 11.6 Q15 11.6 16.4 15.6 Q13.5 18.6 10 18.6 Q6.5 18.6 3.6 15.6Z" fill="#fff"/><path d="M22.5 8.6 L27.5 8.6 L25 11.4Z" fill="#666"/></svg>
<div class="abs" style="left:433.5px;top:192px;width:556px;height:492px;background:#eceef1"></div>
<div class="abs" style="left:441px;top:197.5px;width:540px;height:487px;background:#fff"></div>
<span class="t cal" id="v_etype" style="transform:scaleX(1.028);left:458px;top:221.5px;color:#3f4449">Event Type</span><svg class="abs" style="left:503px;top:224.5px" width="6" height="4" viewBox="0 0 6 4"><path d="M0 0 H5.4 L2.7 3Z" fill="#555"/></svg>
<span class="t cal" id="v_org" style="transform:scaleX(1.045);left:533px;top:221.5px;color:#3f4449">Organizer</span><svg class="abs" style="left:574px;top:224.5px" width="6" height="4" viewBox="0 0 6 4"><path d="M0 0 H5.4 L2.7 3Z" fill="#555"/></svg>
<div class="abs" style="left:603.5px;top:214.5px;width:124.5px;height:21.5px;border:1px solid #e3e6e9;border-radius:2px;background:#fff"></div>
<span class="t cal" id="v_sel" style="transform:scaleX(1.047);left:610.5px;top:221.5px;color:#9a9fa5">Select user</span>
<div class="abs" style="left:441px;top:254px;width:540px;height:30px;background:#f1f2f4;border-top:1px solid #e6e8ea;border-bottom:1px solid #e6e8ea"></div>
<div class="abs" style="left:441px;top:284.5px;width:540px;height:17px;background:#f6f7f8;border-bottom:1px solid #e6e8ea"></div>
<span class="t cal" id="v_today" style="transform:scaleX(1.058);left:457.5px;top:265.5px;color:#3f4449">Today</span>
<svg class="abs" style="left:652px;top:264px" width="8" height="11" viewBox="0 0 8 11"><path d="M6 1 L2 5.5 L6 10" fill="none" stroke="#444" stroke-width="1.3"/></svg>
<span class="t" id="v_feb" style="transform:scaleX(0.928);left:674.5px;top:263px;font-size:12px;color:#3a3f45">February 2018</span>
<svg class="abs" style="left:761px;top:264px" width="8" height="11" viewBox="0 0 8 11"><path d="M2 1 L6 5.5 L2 10" fill="none" stroke="#444" stroke-width="1.3"/></svg>
<span class="t cal" id="v_month" style="transform:scaleX(1.053);left:871px;top:265.5px;color:#3f4449;font-weight:bold;font-size:7.6px">Month</span>
<div class="abs" style="left:595.5px;top:365.5px;width:76.5px;height:64px;background:#e4edf8"></div>
<div class="vl" style="left:517.2px"></div><div class="vl" style="left:594.2px"></div><div class="vl" style="left:671.2px"></div><div class="vl" style="left:748.2px"></div><div class="vl" style="left:825.2px"></div><div class="vl" style="left:902.2px"></div><div class="hl" style="top:365.5px"></div><div class="hl" style="top:429.5px"></div><div class="hl" style="top:493.5px"></div><div class="hl" style="top:557.5px"></div><div class="hl" style="top:621.5px"></div><div class="hl" style="top:685.5px"></div>
<span class="t dn" style="left:459.5px;width:40px;text-align:center;top:290px">Sun</span><span class="t dn" style="left:536.5px;width:40px;text-align:center;top:290px">Mon</span><span class="t dn" style="left:613.5px;width:40px;text-align:center;top:290px">Tue</span><span class="t dn" style="left:690.5px;width:40px;text-align:center;top:290px">Wed</span><span class="t dn" style="left:767.5px;width:40px;text-align:center;top:290px">Thu</span><span class="t dn" style="left:844.5px;width:40px;text-align:center;top:290px">Fri</span><span class="t dn" style="left:921.5px;width:40px;text-align:center;top:290px">Sat</span>
<span class="t dt o" style="left:482.5px;width:30px;top:309.7px">28</span><span class="t dt o" style="left:559.5px;width:30px;top:309.7px">29</span><span class="t dt o" style="left:636.5px;width:30px;top:309.7px">30</span><span class="t dt o" style="left:713.5px;width:30px;top:309.7px">31</span><span class="t dt" style="left:790.5px;width:30px;top:309.7px">1</span><span class="t dt" style="left:867.5px;width:30px;top:309.7px">2</span><span class="t dt" style="left:944.5px;width:30px;top:309.7px">3</span><span class="t dt" style="left:482.5px;width:30px;top:373.7px">4</span><span class="t dt" style="left:559.5px;width:30px;top:373.7px">5</span><span class="t dt" style="left:636.5px;width:30px;top:373.7px">6</span><span class="t dt" style="left:713.5px;width:30px;top:373.7px">7</span><span class="t dt" style="left:790.5px;width:30px;top:373.7px">8</span><span class="t dt" style="left:867.5px;width:30px;top:373.7px">9</span><span class="t dt" style="left:944.5px;width:30px;top:373.7px">10</span><span class="t dt" style="left:482.5px;width:30px;top:437.7px">11</span><span class="t dt" style="left:559.5px;width:30px;top:437.7px">12</span><span class="t dt" style="left:636.5px;width:30px;top:437.7px">13</span><span class="t dt" style="left:713.5px;width:30px;top:437.7px">14</span><span class="t dt" style="left:790.5px;width:30px;top:437.7px">15</span><span class="t dt" style="left:867.5px;width:30px;top:437.7px">16</span><span class="t dt" style="left:944.5px;width:30px;top:437.7px">17</span><span class="t dt" style="left:482.5px;width:30px;top:501.7px">18</span><span class="t dt" style="left:559.5px;width:30px;top:501.7px">19</span><span class="t dt" style="left:636.5px;width:30px;top:501.7px">20</span><span class="t dt" style="left:713.5px;width:30px;top:501.7px">21</span><span class="t dt" style="left:790.5px;width:30px;top:501.7px">22</span><span class="t dt" style="left:867.5px;width:30px;top:501.7px">23</span><span class="t dt" style="left:944.5px;width:30px;top:501.7px">24</span><span class="t dt" style="left:482.5px;width:30px;top:565.7px">25</span><span class="t dt" style="left:559.5px;width:30px;top:565.7px">26</span><span class="t dt" style="left:636.5px;width:30px;top:565.7px">27</span><span class="t dt" style="left:713.5px;width:30px;top:565.7px">28</span><span class="t dt o" style="left:790.5px;width:30px;top:565.7px">1</span><span class="t dt o" style="left:867.5px;width:30px;top:565.7px">2</span><span class="t dt o" style="left:944.5px;width:30px;top:565.7px">3</span><span class="t dt o" style="left:482.5px;width:30px;top:629.7px">4</span><span class="t dt o" style="left:559.5px;width:30px;top:629.7px">5</span><span class="t dt o" style="left:636.5px;width:30px;top:629.7px">6</span><span class="t dt o" style="left:713.5px;width:30px;top:629.7px">7</span><span class="t dt o" style="left:790.5px;width:30px;top:629.7px">8</span><span class="t dt o" style="left:867.5px;width:30px;top:629.7px">9</span><span class="t dt o" style="left:944.5px;width:30px;top:629.7px">10</span>
<div class="abs" style="left:905px;top:214.5px;width:58px;height:22px;background:#2f9a3f;border-radius:2px"></div>
<span class="t" id="v_add" style="transform:scaleX(0.986);left:921px;top:221px;font-size:8.5px;font-weight:bold;color:#fff">Add</span>
<div class="abs" style="left:898.5px;top:242px;width:63.5px;height:44.5px;background:#fff;border-radius:2px;box-shadow:0 0 3px rgba(0,0,0,.18)"></div>
<svg class="abs" style="left:906px;top:248px" width="12" height="11" viewBox="0 0 12 11"><rect x="1" y=".5" width="10" height="2.4" fill="#5fae58"/><circle cx="6" cy="5" r="1.8" fill="#d9a066"/><path d="M2.5 10.5 Q2.5 7 6 7 Q9.5 7 9.5 10.5Z" fill="#2d3138"/></svg><span class="t cal" id="v_train" style="transform:scaleX(1.094);left:922px;top:250.80px;font-size:7.6px;color:#4a4f55">Training</span>
<svg class="abs" style="left:906px;top:267px" width="12" height="11" viewBox="0 0 12 11"><rect x="1" y=".5" width="10" height="2.4" fill="#4f87d6"/><rect x="1" y="2.9" width="10" height="4" fill="#eef2f7"/><ellipse cx="6" cy="8.6" rx="4.6" ry="2" fill="#2d3138"/></svg><span class="t cal" id="v_web" style="transform:scaleX(1.055);left:922px;top:269.80px;font-size:7.6px;color:#4a4f55">Webinar</span>
<div class="abs" style="left:939px;top:214.5px;width:22px;height:22px;border-radius:50%;background:radial-gradient(circle,rgba(214,120,30,.95) 0%,rgba(222,160,40,.85) 35%,rgba(200,190,60,.55) 65%,rgba(170,190,70,0) 100%)"></div>
<svg class="abs" style="left:944px;top:225px" width="14" height="17" viewBox="0 0 14 17"><path d="M4 1.2 Q4 .2 5 .2 Q6 .2 6 1.2 V6 L7 6 Q7.2 5 8.2 5.2 Q9 5.4 9 6.4 Q9.4 5.6 10.2 5.9 Q11 6.2 11 7 Q11.6 6.5 12.3 6.9 Q13 7.3 13 8.2 V11.5 Q13 15.5 9 15.8 H7.5 Q5.5 15.8 4.2 13.8 L1.2 9.8 Q.6 8.8 1.5 8.3 Q2.4 7.9 3.2 8.8 L4 9.8Z" fill="#fff" stroke="#222" stroke-width=".9"/></svg>
<div class="abs" style="left:989.5px;top:153px;width:9px;height:531px;background:#f0f0f0"></div>
<div class="abs" style="left:989.5px;top:163px;width:6.3px;height:458px;background:#c9c9c9"></div><div class="abs" style="left:996.3px;top:163px;width:1.2px;height:521px;background:#b4c3d6"></div>
<svg class="abs" style="left:991px;top:156px" width="5" height="4" viewBox="0 0 5 4"><path d="M0 3.5 L2.5 .5 L5 3.5Z" fill="#777"/></svg><svg class="abs" style="left:991px;top:677px" width="5" height="4" viewBox="0 0 5 4"><path d="M0 .5 L2.5 3.5 L5 .5Z" fill="#777"/></svg>
</div></div>
<div id="pip" class="abs" style="left:292.5px;top:381px;width:403px;height:303px;overflow:hidden;background:#d6d9e0">
<svg class="abs" style="left:0;top:0" width="403" height="303"><use href="#wm" width="403" height="303"/></svg>
</div>
<svg class="abs" style="left:280px;top:325px" width="430" height="375" viewBox="280 325 430 375">
<rect x="292.5" y="381" width="403" height="303" fill="none" stroke="#f4f5f6" stroke-width="1.6"/>
<g fill="none" stroke="#3a4048" stroke-width="1.7"><path d="M292.5 381 H695.5" stroke-dasharray="8.6 8.2" stroke-dashoffset="0.7"/><path d="M292.5 684 H695.5" stroke-dasharray="8.4 8.3" stroke-dashoffset="10.1"/><path d="M292.5 381 V684" stroke-dasharray="8.5 4.15" stroke-dashoffset="3"/><path d="M695.5 381 V684" stroke-dasharray="8.5 4.15" stroke-dashoffset="7.8"/></g>
<!-- rotation handle -->
<path d="M493.7 356 V377" stroke="#9a9a9a" stroke-width="1.5"/>
<path d="M501.1 344.5 A7.7 7.7 0 1 0 497.9 352.1" fill="none" stroke="#8c8c8c" stroke-width="6"/>
<path d="M494.6 344 L509 344 L501.8 351Z" fill="#8c8c8c" stroke="#8c8c8c" stroke-width="1.4" stroke-linejoin="round"/>
<path d="M501.1 344.9 A7.7 7.7 0 1 0 497.6 351.6" fill="none" stroke="#fff" stroke-width="2.8"/>
<path d="M497 345.1 L506.6 345.1 L501.8 349.8Z" fill="#fff"/>
<g fill="#fff" stroke="#70757a" stroke-width="1.5">
<circle cx="292.5" cy="381" r="4.5"/><circle cx="494" cy="381" r="4.5"/><circle cx="695.5" cy="381" r="4.5"/>
<circle cx="292.5" cy="532" r="4.5"/><circle cx="695.5" cy="532" r="4.5"/>
<circle cx="292.5" cy="684" r="4.5"/><circle cx="494" cy="684" r="4.5"/><circle cx="695.5" cy="684" r="4.5"/>
</g>
<!-- cursor highlight -->
<defs><radialGradient id="cg"><stop offset="0" stop-color="#e4c474"/><stop offset=".86" stop-color="#e4c474"/><stop offset="1" stop-color="#e4c474" stop-opacity="0"/></radialGradient></defs><circle cx="667.7" cy="397.3" r="18.6" fill="url(#cg)"/>
<g transform="translate(668 398) rotate(-45)">
<path d="M-12.4 0 L-7 -4.6 L-7 -1.2 L7 -1.2 L7 -4.6 L12.4 0 L7 4.6 L7 1.2 L-7 1.2 L-7 4.6Z" fill="#fff" stroke="#111" stroke-width="1.25" stroke-linejoin="miter"/>
</g>
</svg>
<!-- zoom control -->
<div class="abs" style="left:1143px;top:183.5px;width:131px;height:31.5px;background:#2b2e31;border:1px solid #34383c;border-radius:4px"></div>
<svg class="abs" style="left:1153px;top:194px" width="12" height="12" viewBox="0 0 12 12"><path d="M.5 6 H10.5" stroke="#d0d2d4" stroke-width="1.6"/></svg>
<span class="t" id="z_pct" style="transform:scaleX(1.019);left:1189px;top:193.80px;font-size:13.5px;color:#d0d2d4">54.2%</span>
<svg class="abs" style="left:1253px;top:193px" width="12" height="12" viewBox="0 0 12 12"><path d="M.5 6 H11 M5.75 .8 V11.2" stroke="#d0d2d4" stroke-width="1.6"/></svg>
<!-- scrollbars -->
<div class="abs" style="left:1292px;top:286px;width:6px;height:272px;background:#8e8e8e;border-radius:3px"></div>
<div class="abs" style="left:0;top:690.5px;width:1299px;height:11px;background:#1b1f23"></div>
<div class="abs" style="left:325px;top:693px;width:644px;height:6.5px;background:#969696;border-radius:3.3px"></div>

</div></div>
<div id="player"><div class="abs" style="left:0;top:1px;width:1299px;height:75px">
<div class="abs" style="left:0;top:0;width:1299px;height:1px;background:#2c3137"></div>
<div class="grp" style="left:20px;width:112px"></div><div class="grp" style="left:139px;width:74px"></div>
<div class="gdv" style="left:57px"></div><div class="gdv" style="left:95px"></div><div class="gdv" style="left:175px"></div>
<svg class="abs" style="left:29px;top:28px" width="18" height="18" viewBox="0 0 18 18"><path d="M4.2 1 L12.2 12.2 M13.8 1 L5.8 12.2" stroke="#d2d4d6" stroke-width="1.9" fill="none"/><circle cx="4.6" cy="14" r="2.4" fill="none" stroke="#d2d4d6" stroke-width="1.6"/><circle cx="13.4" cy="14" r="2.4" fill="none" stroke="#d2d4d6" stroke-width="1.6"/></svg>
<svg class="abs" style="left:68px;top:28px" width="18" height="18" viewBox="0 0 18 18"><path d="M1.5 1.5 H8.5 V3 H3.2 V13.5 H1.5Z" fill="#d2d4d6"/><path d="M4.6 4.4 H11 L15.4 8.8 V17 H4.6Z" fill="#d2d4d6"/><path d="M10.6 4.6 V9.2 H15.2" fill="none" stroke="#343a41" stroke-width="1"/><path d="M6.6 11.2 H13.4 M6.6 13.2 H13.4 M6.6 15.2 H13.4" stroke="#343a41" stroke-width=".9"/></svg>
<svg class="abs" style="left:105px;top:27px" width="19" height="20" viewBox="0 0 19 20"><path d="M1.5 3.5 H5.5 Q5.5 1 8 1 Q10.5 1 10.5 3.5 H14.5 V9 H8.5 V17.5 H1.5Z" fill="#d2d4d6"/><circle cx="8" cy="3.2" r="1" fill="#343a41"/><path d="M9.8 10.2 H14.4 L17.6 13.4 V19 H9.8Z" fill="#d2d4d6"/><path d="M14.2 10.4 V13.6 H17.4" fill="none" stroke="#343a41" stroke-width=".9"/></svg>
<svg class="abs" style="left:148px;top:28px" width="18" height="18" viewBox="0 0 18 18"><path d="M1.6 2 Q8 7 15.6 16 M16.4 2 Q10 7 2.4 16" fill="none" stroke="#d2d4d6" stroke-width="1.9" stroke-linecap="round"/></svg>
<svg class="abs" style="left:185px;top:29px" width="19" height="16" viewBox="0 0 19 16"><path d="M6.2 1.6 H2 V14.4 H6.2 M12.8 1.6 H17 V14.4 H12.8" fill="none" stroke="#d2d4d6" stroke-width="1.9"/><path d="M9.5 0 V16" stroke="#d2d4d6" stroke-width="1.2"/></svg>
<div class="abs" style="left:265px;top:20.5px;width:211px;height:33px;border-radius:17px;background:#34393f"></div>
<div class="gdv" style="left:305.5px"></div><div class="gdv" style="left:434.5px"></div>
<div class="abs" style="left:343px;top:9px;width:56px;height:56px;border-radius:50%;background:#3d4249"></div>
<div class="abs" style="left:346px;top:12px;width:50px;height:50px;border-radius:50%;background:#33383e"></div>
<svg class="abs" style="left:280px;top:29px" width="16" height="16" viewBox="0 0 16 16"><rect x="1.6" y="2" width="2" height="12" fill="#d2d4d6"/><path d="M14 2 V14 L4.6 8Z" fill="#d2d4d6"/></svg>
<svg class="abs" style="left:316px;top:29px" width="16" height="16" viewBox="0 0 16 16"><rect x="12.4" y="2" width="2" height="12" fill="#d2d4d6"/><path d="M2 2 V14 L11.4 8Z" fill="#d2d4d6"/></svg>
<svg class="abs" style="left:362px;top:25px" width="20" height="24" viewBox="0 0 20 24"><path d="M1.2 .8 L19 12 L1.2 23.2Z" fill="#d2d4d6"/></svg>
<svg class="abs" style="left:411px;top:29.5px" width="11" height="15" viewBox="0 0 11 15"><path d="M9 1 L2 7.5 L9 14" fill="none" stroke="#d2d4d6" stroke-width="1.9"/></svg>
<svg class="abs" style="left:447px;top:29.5px" width="11" height="15" viewBox="0 0 11 15"><path d="M2 1 L9 7.5 L2 14" fill="none" stroke="#d2d4d6" stroke-width="1.9"/></svg>
<div class="abs" style="left:496px;top:34.5px;width:390px;height:5px;border-radius:3px;background:#272b30"></div>
<div class="abs" style="left:496px;top:34.5px;width:148px;height:5px;border-radius:3px;background:#6c93b5"></div>
<div class="abs" style="left:638.5px;top:32px;width:10px;height:10px;border-radius:50%;background:#ececec"></div>
<span class="t" id="p_time" style="transform:scaleX(0.970);left:896px;top:30.5px;font-size:12.5px;color:#e6e7e9">0:06.2 / 0:16.5</span>
</div></div>
<div id="tl">
<div class="abs" style="left:0;top:0;width:1299px;height:29px;background:#2b2f34"></div>
<div class="abs" style="left:0;top:0;width:28px;height:197px;background:#2c3136"></div>
<div class="abs" style="left:28px;top:29px;width:1271px;height:74px;background:#292d31"></div>
<div class="abs" style="left:28px;top:103px;width:1271px;height:74px;background:#262a2e"></div>
<div class="abs" style="left:0;top:177px;width:1299px;height:20px;background:#282c30;border-top:1px solid #212529"></div><div class="abs" style="left:0;top:193.5px;width:1299px;height:4px;background:#1e2124"></div>
<div class="abs" style="left:0;top:102.5px;width:1299px;height:1px;background:#24282c"></div>
<svg class="abs" style="left:7px;top:9px" width="12" height="12" viewBox="0 0 12 12"><path d="M.5 6 H11.5 M6 .5 V11.5" stroke="#b9bcc0" stroke-width="1.5"/></svg>
<svg class="abs" style="left:0;top:0" width="1299" height="29" viewBox="0 0 1299 29"><path d="M28.0 20.5 V29" stroke="#4d5359" stroke-width="1"/><path d="M35.5 26 V29" stroke="#3b4046" stroke-width="1"/><path d="M43.0 26 V29" stroke="#3b4046" stroke-width="1"/><path d="M50.5 26 V29" stroke="#3b4046" stroke-width="1"/><path d="M58.0 26 V29" stroke="#3b4046" stroke-width="1"/><path d="M65.5 23.5 V29" stroke="#43494f" stroke-width="1"/><path d="M73.0 26 V29" stroke="#3b4046" stroke-width="1"/><path d="M80.5 26 V29" stroke="#3b4046" stroke-width="1"/><path d="M88.0 26 V29" stroke="#3b4046" stroke-width="1"/><path d="M95.5 26 V29" stroke="#3b4046" stroke-width="1"/><path d="M103.0 20.5 V29" stroke="#4d5359" stroke-width="1"/><path d="M110.5 26 V29" stroke="#3b4046" stroke-width="1"/><path d="M118.0 26 V29" stroke="#3b4046" stroke-width="1"/><path d="M125.5 26 V29" stroke="#3b4046" stroke-width="1"/><path d="M133.0 26 V29" stroke="#3b4046" stroke-width="1"/><path d="M140.5 23.5 V29" stroke="#43494f" stroke-width="1"/><path d="M148.0 26 V29" stroke="#3b4046" stroke-width="1"/><path d="M155.5 26 V29" stroke="#3b4046" stroke-width="1"/><path d="M163.0 26 V29" stroke="#3b4046" stroke-width="1"/><path d="M170.5 26 V29" stroke="#3b4046" stroke-width="1"/><path d="M178.0 20.5 V29" stroke="#4d5359" stroke-width="1"/><path d="M185.5 26 V29" stroke="#3b4046" stroke-width="1"/><path d="M193.0 26 V29" stroke="#3b4046" stroke-width="1"/><path d="M200.5 26 V29" stroke="#3b4046" stroke-width="1"/><path d="M208.0 26 V29" stroke="#3b4046" stroke-width="1"/><path d="M215.5 23.5 V29" stroke="#43494f" stroke-width="1"/><path d="M223.0 26 V29" stroke="#3b4046" stroke-width="1"/><path d="M230.5 26 V29" stroke="#3b4046" stroke-width="1"/><path d="M238.0 26 V29" stroke="#3b4046" stroke-width="1"/><path d="M245.5 26 V29" stroke="#3b4046" stroke-width="1"/><path d="M253.0 20.5 V29" stroke="#4d5359" stroke-width="1"/><path d="M260.5 26 V29" stroke="#3b4046" stroke-width="1"/><path d="M268.0 26 V29" stroke="#3b4046" stroke-width="1"/><path d="M275.5 26 V29" stroke="#3b4046" stroke-width="1"/><path d="M283.0 26 V29" stroke="#3b4046" stroke-width="1"/><path d="M290.5 23.5 V29" stroke="#43494f" stroke-width="1"/><path d="M298.0 26 V29" stroke="#3b4046" stroke-width="1"/><path d="M305.5 26 V29" stroke="#3b4046" stroke-width="1"/><path d="M313.0 26 V29" stroke="#3b4046" stroke-width="1"/><path d="M320.5 26 V29" stroke="#3b4046" stroke-width="1"/><path d="M328.0 20.5 V29" stroke="#4d5359" stroke-width="1"/><path d="M335.5 26 V29" stroke="#3b4046" stroke-width="1"/><path d="M343.0 26 V29" stroke="#3b4046" stroke-width="1"/><path d="M350.5 26 V29" stroke="#3b4046" stroke-width="1"/><path d="M358.0 26 V29" stroke="#3b4046" stroke-width="1"/><path d="M365.5 23.5 V29" stroke="#43494f" stroke-width="1"/><path d="M373.0 26 V29" stroke="#3b4046" stroke-width="1"/><path d="M380.5 26 V29" stroke="#3b4046" stroke-width="1"/><path d="M388.0 26 V29" stroke="#3b4046" stroke-width="1"/><path d="M395.5 26 V29" stroke="#3b4046" stroke-width="1"/><path d="M403.0 20.5 V29" stroke="#4d5359" stroke-width="1"/><path d="M410.5 26 V29" stroke="#3b4046" stroke-width="1"/><path d="M418.0 26 V29" stroke="#3b4046" stroke-width="1"/><path d="M425.5 26 V29" stroke="#3b4046" stroke-width="1"/><path d="M433.0 26 V29" stroke="#3b4046" stroke-width="1"/><path d="M440.5 23.5 V29" stroke="#43494f" stroke-width="1"/><path d="M448.0 26 V29" stroke="#3b4046" stroke-width="1"/><path d="M455.5 26 V29" stroke="#3b4046" stroke-width="1"/><path d="M463.0 26 V29" stroke="#3b4046" stroke-width="1"/><path d="M470.5 26 V29" stroke="#3b4046" stroke-width="1"/><path d="M478.0 20.5 V29" stroke="#4d5359" stroke-width="1"/><path d="M485.5 26 V29" stroke="#3b4046" stroke-width="1"/><path d="M493.0 26 V29" stroke="#3b4046" stroke-width="1"/><path d="M500.5 26 V29" stroke="#3b4046" stroke-width="1"/><path d="M508.0 26 V29" stroke="#3b4046" stroke-width="1"/><path d="M515.5 23.5 V29" stroke="#43494f" stroke-width="1"/><path d="M523.0 26 V29" stroke="#3b4046" stroke-width="1"/><path d="M530.5 26 V29" stroke="#3b4046" stroke-width="1"/><path d="M538.0 26 V29" stroke="#3b4046" stroke-width="1"/><path d="M545.5 26 V29" stroke="#3b4046" stroke-width="1"/><path d="M553.0 20.5 V29" stroke="#4d5359" stroke-width="1"/><path d="M560.5 26 V29" stroke="#3b4046" stroke-width="1"/><path d="M568.0 26 V29" stroke="#3b4046" stroke-width="1"/><path d="M575.5 26 V29" stroke="#3b4046" stroke-width="1"/><path d="M583.0 26 V29" stroke="#3b4046" stroke-width="1"/><path d="M590.5 23.5 V29" stroke="#43494f" stroke-width="1"/><path d="M598.0 26 V29" stroke="#3b4046" stroke-width="1"/><path d="M605.5 26 V29" stroke="#3b4046" stroke-width="1"/><path d="M613.0 26 V29" stroke="#3b4046" stroke-width="1"/><path d="M620.5 26 V29" stroke="#3b4046" stroke-width="1"/><path d="M628.0 20.5 V29" stroke="#4d5359" stroke-width="1"/><path d="M635.5 26 V29" stroke="#3b4046" stroke-width="1"/><path d="M643.0 26 V29" stroke="#3b4046" stroke-width="1"/><path d="M650.5 26 V29" stroke="#3b4046" stroke-width="1"/><path d="M658.0 26 V29" stroke="#3b4046" stroke-width="1"/><path d="M665.5 23.5 V29" stroke="#43494f" stroke-width="1"/><path d="M673.0 26 V29" stroke="#3b4046" stroke-width="1"/><path d="M680.5 26 V29" stroke="#3b4046" stroke-width="1"/><path d="M688.0 26 V29" stroke="#3b4046" stroke-width="1"/><path d="M695.5 26 V29" stroke="#3b4046" stroke-width="1"/><path d="M703.0 20.5 V29" stroke="#4d5359" stroke-width="1"/><path d="M710.5 26 V29" stroke="#3b4046" stroke-width="1"/><path d="M718.0 26 V29" stroke="#3b4046" stroke-width="1"/><path d="M725.5 26 V29" stroke="#3b4046" stroke-width="1"/><path d="M733.0 26 V29" stroke="#3b4046" stroke-width="1"/><path d="M740.5 23.5 V29" stroke="#43494f" stroke-width="1"/><path d="M748.0 26 V29" stroke="#3b4046" stroke-width="1"/><path d="M755.5 26 V29" stroke="#3b4046" stroke-width="1"/><path d="M763.0 26 V29" stroke="#3b4046" stroke-width="1"/><path d="M770.5 26 V29" stroke="#3b4046" stroke-width="1"/><path d="M778.0 20.5 V29" stroke="#4d5359" stroke-width="1"/><path d="M785.5 26 V29" stroke="#3b4046" stroke-width="1"/><path d="M793.0 26 V29" stroke="#3b4046" stroke-width="1"/><path d="M800.5 26 V29" stroke="#3b4046" stroke-width="1"/><path d="M808.0 26 V29" stroke="#3b4046" stroke-width="1"/><path d="M815.5 23.5 V29" stroke="#43494f" stroke-width="1"/><path d="M823.0 26 V29" stroke="#3b4046" stroke-width="1"/><path d="M830.5 26 V29" stroke="#3b4046" stroke-width="1"/><path d="M838.0 26 V29" stroke="#3b4046" stroke-width="1"/><path d="M845.5 26 V29" stroke="#3b4046" stroke-width="1"/><path d="M853.0 20.5 V29" stroke="#4d5359" stroke-width="1"/><path d="M860.5 26 V29" stroke="#3b4046" stroke-width="1"/><path d="M868.0 26 V29" stroke="#3b4046" stroke-width="1"/><path d="M875.5 26 V29" stroke="#3b4046" stroke-width="1"/><path d="M883.0 26 V29" stroke="#3b4046" stroke-width="1"/><path d="M890.5 23.5 V29" stroke="#43494f" stroke-width="1"/><path d="M898.0 26 V29" stroke="#3b4046" stroke-width="1"/><path d="M905.5 26 V29" stroke="#3b4046" stroke-width="1"/><path d="M913.0 26 V29" stroke="#3b4046" stroke-width="1"/><path d="M920.5 26 V29" stroke="#3b4046" stroke-width="1"/><path d="M928.0 20.5 V29" stroke="#4d5359" stroke-width="1"/><path d="M935.5 26 V29" stroke="#3b4046" stroke-width="1"/><path d="M943.0 26 V29" stroke="#3b4046" stroke-width="1"/><path d="M950.5 26 V29" stroke="#3b4046" stroke-width="1"/><path d="M958.0 26 V29" stroke="#3b4046" stroke-width="1"/><path d="M965.5 23.5 V29" stroke="#43494f" stroke-width="1"/><path d="M973.0 26 V29" stroke="#3b4046" stroke-width="1"/><path d="M980.5 26 V29" stroke="#3b4046" stroke-width="1"/><path d="M988.0 26 V29" stroke="#3b4046" stroke-width="1"/><path d="M995.5 26 V29" stroke="#3b4046" stroke-width="1"/><path d="M1003.0 20.5 V29" stroke="#4d5359" stroke-width="1"/><path d="M1010.5 26 V29" stroke="#3b4046" stroke-width="1"/><path d="M1018.0 26 V29" stroke="#3b4046" stroke-width="1"/><path d="M1025.5 26 V29" stroke="#3b4046" stroke-width="1"/><path d="M1033.0 26 V29" stroke="#3b4046" stroke-width="1"/><path d="M1040.5 23.5 V29" stroke="#43494f" stroke-width="1"/><path d="M1048.0 26 V29" stroke="#3b4046" stroke-width="1"/><path d="M1055.5 26 V29" stroke="#3b4046" stroke-width="1"/><path d="M1063.0 26 V29" stroke="#3b4046" stroke-width="1"/><path d="M1070.5 26 V29" stroke="#3b4046" stroke-width="1"/><path d="M1078.0 20.5 V29" stroke="#4d5359" stroke-width="1"/><path d="M1085.5 26 V29" stroke="#3b4046" stroke-width="1"/><path d="M1093.0 26 V29" stroke="#3b4046" stroke-width="1"/><path d="M1100.5 26 V29" stroke="#3b4046" stroke-width="1"/><path d="M1108.0 26 V29" stroke="#3b4046" stroke-width="1"/><path d="M1115.5 23.5 V29" stroke="#43494f" stroke-width="1"/><path d="M1123.0 26 V29" stroke="#3b4046" stroke-width="1"/><path d="M1130.5 26 V29" stroke="#3b4046" stroke-width="1"/><path d="M1138.0 26 V29" stroke="#3b4046" stroke-width="1"/><path d="M1145.5 26 V29" stroke="#3b4046" stroke-width="1"/><path d="M1153.0 20.5 V29" stroke="#4d5359" stroke-width="1"/><path d="M1160.5 26 V29" stroke="#3b4046" stroke-width="1"/><path d="M1168.0 26 V29" stroke="#3b4046" stroke-width="1"/><path d="M1175.5 26 V29" stroke="#3b4046" stroke-width="1"/><path d="M1183.0 26 V29" stroke="#3b4046" stroke-width="1"/><path d="M1190.5 23.5 V29" stroke="#43494f" stroke-width="1"/><path d="M1198.0 26 V29" stroke="#3b4046" stroke-width="1"/><path d="M1205.5 26 V29" stroke="#3b4046" stroke-width="1"/><path d="M1213.0 26 V29" stroke="#3b4046" stroke-width="1"/><path d="M1220.5 26 V29" stroke="#3b4046" stroke-width="1"/><path d="M1228.0 20.5 V29" stroke="#4d5359" stroke-width="1"/><path d="M1235.5 26 V29" stroke="#3b4046" stroke-width="1"/><path d="M1243.0 26 V29" stroke="#3b4046" stroke-width="1"/><path d="M1250.5 26 V29" stroke="#3b4046" stroke-width="1"/><path d="M1258.0 26 V29" stroke="#3b4046" stroke-width="1"/><path d="M1265.5 23.5 V29" stroke="#43494f" stroke-width="1"/><path d="M1273.0 26 V29" stroke="#3b4046" stroke-width="1"/><path d="M1280.5 26 V29" stroke="#3b4046" stroke-width="1"/><path d="M1288.0 26 V29" stroke="#3b4046" stroke-width="1"/><path d="M1295.5 26 V29" stroke="#3b4046" stroke-width="1"/></svg>
<span class="rl" style="left:83px">0:01</span><span class="rl" style="left:158px">0:02</span><span class="rl" style="left:233px">0:03</span><span class="rl" style="left:308px">0:04</span><span class="rl" style="left:383px">0:05</span><span class="rl" style="left:458px">0:06</span><span class="rl" style="left:533px">0:07</span><span class="rl" style="left:608px">0:08</span><span class="rl" style="left:683px">0:09</span><span class="rl" style="left:758px">0:10</span><span class="rl" style="left:833px">0:11</span><span class="rl" style="left:908px">0:12</span><span class="rl" style="left:983px">0:13</span><span class="rl" style="left:1058px">0:14</span><span class="rl" style="left:1133px">0:15</span><span class="rl" style="left:1208px">0:16</span>
<svg class="abs" style="left:6px;top:49px" width="14" height="9" viewBox="0 0 14 9"><path d="M.6 4.5 Q7 -2.6 13.4 4.5 Q7 11.6 .6 4.5Z" fill="none" stroke="#636a71" stroke-width="1.6"/><circle cx="7" cy="4.5" r="2.3" fill="#636a71"/></svg><svg class="abs" style="left:7px;top:73px" width="12" height="13" viewBox="0 0 12 13"><rect x=".5" y="6.5" width="10.6" height="6" fill="#636a71"/><path d="M2 6.5 V3.6 Q2 .8 4.6 .8 Q7 .8 7.2 3.2" fill="none" stroke="#636a71" stroke-width="1.7"/></svg><svg class="abs" style="left:6px;top:123px" width="14" height="9" viewBox="0 0 14 9"><path d="M.6 4.5 Q7 -2.6 13.4 4.5 Q7 11.6 .6 4.5Z" fill="none" stroke="#636a71" stroke-width="1.6"/><circle cx="7" cy="4.5" r="2.3" fill="#636a71"/></svg><svg class="abs" style="left:7px;top:147px" width="12" height="13" viewBox="0 0 12 13"><rect x=".5" y="6.5" width="10.6" height="6" fill="#636a71"/><path d="M2 6.5 V3.6 Q2 .8 4.6 .8 Q7 .8 7.2 3.2" fill="none" stroke="#636a71" stroke-width="1.7"/></svg>
<div class="abs" style="left:5px;top:66px;width:18px;height:1px;background:#3b4147"></div><div class="abs" style="left:5px;top:140px;width:18px;height:1px;background:#3b4147"></div>
<div class="clip" style="left:28px;top:30px;width:409.5px;height:71.5px;background:#43484f"><svg class="abs" style="left:8.5px;top:6px" width="81.5" height="61"><use href="#wm" width="81.5" height="61"/></svg><div class="abs" style="left:0;top:0;width:75px;height:72px;background:rgba(74,140,194,.775)"></div><div class="abs" style="left:0;top:0;width:75px;height:71.5px;border:1.5px solid #67a6d6;border-right:0;border-radius:6px 0 0 6px"></div><svg class="abs" style="left:101.5px;top:26.8px" width="16" height="16" viewBox="0 0 16 16"><rect x="1" y="1" width="14" height="14" fill="none" stroke="#eef0f1" stroke-width="1.5"/><path d="M4.3 1 V15 M11.7 1 V15 M4.3 8 H11.7" stroke="#eef0f1" stroke-width="1.3"/><path d="M1 4.5 H4 M1 8 H4 M1 11.5 H4 M12 4.5 H15 M12 8 H15 M12 11.5 H15" stroke="#eef0f1" stroke-width="1.1"/></svg><span class="cn" id="c_m1" style="transform:scaleX(0.925);left:125.80px;top:29.5px">Moniq_26_02</span></div>
<div class="clip" style="left:439.5px;top:30px;width:795px;height:71.5px;background:#42474d;border:1.8px solid #cfaa6e;border-radius:7px"><svg class="abs" style="left:6.7px;top:5px" width="81.5" height="61"><use href="#wm" width="81.5" height="61"/></svg><svg class="abs" style="left:100px;top:26px" width="16" height="16" viewBox="0 0 16 16"><rect x="1" y="1" width="14" height="14" fill="none" stroke="#eef0f1" stroke-width="1.5"/><path d="M4.3 1 V15 M11.7 1 V15 M4.3 8 H11.7" stroke="#eef0f1" stroke-width="1.3"/><path d="M1 4.5 H4 M1 8 H4 M1 11.5 H4 M12 4.5 H15 M12 8 H15 M12 11.5 H15" stroke="#eef0f1" stroke-width="1.1"/></svg><span class="cn" id="c_m2" style="transform:scaleX(0.927);left:124px;top:28px">Moniq_26_02</span></div>
<div class="clip c2" style="left:282.5px;width:138.0px"><div class="abs" style="left:7px;top:6px;width:81.5px;height:61px;background:#fdfdfd;filter:blur(.45px)"><div class="abs" style="left:0;top:0;width:16.5px;height:61px;background:#414a53"></div><div class="abs" style="left:2px;top:3px;width:8px;height:1.5px;background:#aab2ba"></div><div class="abs" style="left:2.5px;top:8.0px;width:7px;height:1px;background:#56606a"></div><div class="abs" style="left:2.5px;top:11.6px;width:8px;height:1px;background:#56606a"></div><div class="abs" style="left:2.5px;top:15.2px;width:9px;height:1px;background:#56606a"></div><div class="abs" style="left:2.5px;top:18.8px;width:7px;height:1px;background:#56606a"></div><div class="abs" style="left:2.5px;top:22.4px;width:8px;height:1px;background:#56606a"></div><div class="abs" style="left:2.5px;top:26.0px;width:9px;height:1px;background:#56606a"></div><div class="abs" style="left:2.5px;top:29.6px;width:7px;height:1px;background:#56606a"></div><div class="abs" style="left:18px;top:3px;width:10px;height:1.2px;background:#b9bec4"></div><div class="abs" style="left:19px;top:8px;width:3px;height:3px;border-radius:50%;background:#d9d37a"></div><div class="abs" style="left:24px;top:9px;width:12px;height:1px;background:#c4c8cd"></div><div class="abs" style="left:50px;top:8px;width:3px;height:3px;border-radius:50%;background:#d9d37a"></div><div class="abs" style="left:55px;top:9px;width:12px;height:1px;background:#c4c8cd"></div><div class="abs" style="left:19px;top:13px;width:3px;height:3px;border-radius:50%;background:#d9d37a"></div><div class="abs" style="left:24px;top:14px;width:12px;height:1px;background:#c4c8cd"></div><div class="abs" style="left:50px;top:13px;width:3px;height:3px;border-radius:50%;background:#d9d37a"></div><div class="abs" style="left:55px;top:14px;width:12px;height:1px;background:#c4c8cd"></div><div class="abs" style="left:19px;top:22px;width:24px;height:1px;background:#d6d9dd"></div><div class="abs" style="left:30px;top:27px;width:10px;height:1px;background:#e2e4e7"></div><div class="abs" style="left:50px;top:22px;width:24px;height:1px;background:#d6d9dd"></div><div class="abs" style="left:61px;top:27px;width:10px;height:1px;background:#e2e4e7"></div><div class="abs" style="left:19px;top:33px;width:24px;height:1px;background:#d6d9dd"></div><div class="abs" style="left:30px;top:38px;width:10px;height:1px;background:#e2e4e7"></div><div class="abs" style="left:50px;top:33px;width:24px;height:1px;background:#d6d9dd"></div><div class="abs" style="left:61px;top:38px;width:10px;height:1px;background:#e2e4e7"></div><div class="abs" style="left:19px;top:44px;width:24px;height:1px;background:#d6d9dd"></div><div class="abs" style="left:30px;top:49px;width:10px;height:1px;background:#e2e4e7"></div><div class="abs" style="left:50px;top:44px;width:24px;height:1px;background:#d6d9dd"></div><div class="abs" style="left:61px;top:49px;width:10px;height:1px;background:#e2e4e7"></div><div class="abs" style="left:0;top:59px;width:16.5px;height:2px;background:#cfd6dd"></div></div><svg class="abs" style="left:101.5px;top:26.5px" width="16" height="16" viewBox="0 0 16 16"><rect x="1" y="1" width="14" height="14" fill="none" stroke="#eef0f1" stroke-width="1.5"/><path d="M4.3 1 V15 M11.7 1 V15 M4.3 8 H11.7" stroke="#eef0f1" stroke-width="1.3"/><path d="M1 4.5 H4 M1 8 H4 M1 11.5 H4 M12 4.5 H15 M12 8 H15 M12 11.5 H15" stroke="#eef0f1" stroke-width="1.1"/></svg><span class="cn" style="left:125.5px;top:29.6px">Recording</span></div>
<div class="clip c2" style="left:422px;width:28.5px"><div class="abs" style="left:7px;top:6px;width:81.5px;height:61px;background:#fdfdfd;filter:blur(.45px)"><div class="abs" style="left:0;top:0;width:16.5px;height:61px;background:#414a53"></div><div class="abs" style="left:2px;top:3px;width:8px;height:1.5px;background:#aab2ba"></div><div class="abs" style="left:2.5px;top:8.0px;width:7px;height:1px;background:#56606a"></div><div class="abs" style="left:2.5px;top:11.6px;width:8px;height:1px;background:#56606a"></div><div class="abs" style="left:2.5px;top:15.2px;width:9px;height:1px;background:#56606a"></div><div class="abs" style="left:2.5px;top:18.8px;width:7px;height:1px;background:#56606a"></div><div class="abs" style="left:2.5px;top:22.4px;width:8px;height:1px;background:#56606a"></div><div class="abs" style="left:2.5px;top:26.0px;width:9px;height:1px;background:#56606a"></div><div class="abs" style="left:2.5px;top:29.6px;width:7px;height:1px;background:#56606a"></div><div class="abs" style="left:18px;top:3px;width:10px;height:1.2px;background:#b9bec4"></div><div class="abs" style="left:19px;top:8px;width:3px;height:3px;border-radius:50%;background:#d9d37a"></div><div class="abs" style="left:24px;top:9px;width:12px;height:1px;background:#c4c8cd"></div><div class="abs" style="left:50px;top:8px;width:3px;height:3px;border-radius:50%;background:#d9d37a"></div><div class="abs" style="left:55px;top:9px;width:12px;height:1px;background:#c4c8cd"></div><div class="abs" style="left:19px;top:13px;width:3px;height:3px;border-radius:50%;background:#d9d37a"></div><div class="abs" style="left:24px;top:14px;width:12px;height:1px;background:#c4c8cd"></div><div class="abs" style="left:50px;top:13px;width:3px;height:3px;border-radius:50%;background:#d9d37a"></div><div class="abs" style="left:55px;top:14px;width:12px;height:1px;background:#c4c8cd"></div><div class="abs" style="left:19px;top:22px;width:24px;height:1px;background:#d6d9dd"></div><div class="abs" style="left:30px;top:27px;width:10px;height:1px;background:#e2e4e7"></div><div class="abs" style="left:50px;top:22px;width:24px;height:1px;background:#d6d9dd"></div><div class="abs" style="left:61px;top:27px;width:10px;height:1px;background:#e2e4e7"></div><div class="abs" style="left:19px;top:33px;width:24px;height:1px;background:#d6d9dd"></div><div class="abs" style="left:30px;top:38px;width:10px;height:1px;background:#e2e4e7"></div><div class="abs" style="left:50px;top:33px;width:24px;height:1px;background:#d6d9dd"></div><div class="abs" style="left:61px;top:38px;width:10px;height:1px;background:#e2e4e7"></div><div class="abs" style="left:19px;top:44px;width:24px;height:1px;background:#d6d9dd"></div><div class="abs" style="left:30px;top:49px;width:10px;height:1px;background:#e2e4e7"></div><div class="abs" style="left:50px;top:44px;width:24px;height:1px;background:#d6d9dd"></div><div class="abs" style="left:61px;top:49px;width:10px;height:1px;background:#e2e4e7"></div><div class="abs" style="left:0;top:59px;width:16.5px;height:2px;background:#cfd6dd"></div></div></div>
<div class="clip c2" style="left:452px;width:143.5px"><div class="abs" style="left:7px;top:6px;width:81.5px;height:61px;background:#fdfdfd;filter:blur(.45px)"><div class="abs" style="left:0;top:0;width:16.5px;height:61px;background:#414a53"></div><div class="abs" style="left:2px;top:3px;width:8px;height:1.5px;background:#aab2ba"></div><div class="abs" style="left:2.5px;top:8.0px;width:7px;height:1px;background:#56606a"></div><div class="abs" style="left:2.5px;top:11.6px;width:8px;height:1px;background:#56606a"></div><div class="abs" style="left:2.5px;top:15.2px;width:9px;height:1px;background:#56606a"></div><div class="abs" style="left:2.5px;top:18.8px;width:7px;height:1px;background:#56606a"></div><div class="abs" style="left:2.5px;top:22.4px;width:8px;height:1px;background:#56606a"></div><div class="abs" style="left:2.5px;top:26.0px;width:9px;height:1px;background:#56606a"></div><div class="abs" style="left:2.5px;top:29.6px;width:7px;height:1px;background:#56606a"></div><div class="abs" style="left:18px;top:3px;width:10px;height:1.2px;background:#b9bec4"></div><div class="abs" style="left:70px;top:7px;width:8px;height:3px;background:#58b460"></div><div class="abs" style="left:18px;top:13px;width:62px;height:2px;background:#eceef0"></div><div class="abs" style="left:36px;top:24px;width:9px;height:8px;background:#dfe8f5"></div><div class="abs" style="left:18px;top:22px;width:62px;height:1px;background:#f0f1f3"></div><div class="abs" style="left:18px;top:30px;width:62px;height:1px;background:#f0f1f3"></div><div class="abs" style="left:18px;top:38px;width:62px;height:1px;background:#f0f1f3"></div><div class="abs" style="left:18px;top:46px;width:62px;height:1px;background:#f0f1f3"></div><div class="abs" style="left:18px;top:54px;width:62px;height:1px;background:#f0f1f3"></div></div><svg class="abs" style="left:100.29999999999995px;top:26.5px" width="16" height="16" viewBox="0 0 16 16"><rect x="1" y="1" width="14" height="14" fill="none" stroke="#eef0f1" stroke-width="1.5"/><path d="M4.3 1 V15 M11.7 1 V15 M4.3 8 H11.7" stroke="#eef0f1" stroke-width="1.3"/><path d="M1 4.5 H4 M1 8 H4 M1 11.5 H4 M12 4.5 H15 M12 8 H15 M12 11.5 H15" stroke="#eef0f1" stroke-width="1.1"/></svg><span class="cn" style="left:125px;top:29.6px">Recording</span></div>
<div class="clip c2" style="left:596.5px;width:41.5px"><div class="abs" style="left:7px;top:6px;width:81.5px;height:61px;background:#fdfdfd;filter:blur(.45px)"><div class="abs" style="left:0;top:0;width:16.5px;height:61px;background:#414a53"></div><div class="abs" style="left:2px;top:3px;width:8px;height:1.5px;background:#aab2ba"></div><div class="abs" style="left:2.5px;top:8.0px;width:7px;height:1px;background:#56606a"></div><div class="abs" style="left:2.5px;top:11.6px;width:8px;height:1px;background:#56606a"></div><div class="abs" style="left:2.5px;top:15.2px;width:9px;height:1px;background:#56606a"></div><div class="abs" style="left:2.5px;top:18.8px;width:7px;height:1px;background:#56606a"></div><div class="abs" style="left:2.5px;top:22.4px;width:8px;height:1px;background:#56606a"></div><div class="abs" style="left:2.5px;top:26.0px;width:9px;height:1px;background:#56606a"></div><div class="abs" style="left:2.5px;top:29.6px;width:7px;height:1px;background:#56606a"></div><div class="abs" style="left:18px;top:3px;width:14px;height:1.2px;background:#b9bec4"></div><div class="abs" style="left:19.5px;top:8px;width:5px;height:5px;border-radius:50%;background:#d4d9df"></div><div class="abs" style="left:26px;top:9px;width:12px;height:1.4px;background:#9aa0a7"></div><div class="abs" style="left:71px;top:21px;width:7px;height:3px;background:#58b460"></div><div class="abs" style="left:18px;top:17px;width:62px;height:1px;background:#e6e8ea"></div><div class="abs" style="left:19.5px;top:27.0px;width:6px;height:1px;background:#b4b9bf"></div><div class="abs" style="left:31px;top:27.0px;width:18px;height:1px;background:#d0d4d8"></div><div class="abs" style="left:19.5px;top:30.6px;width:6px;height:1px;background:#b4b9bf"></div><div class="abs" style="left:31px;top:30.6px;width:24px;height:1px;background:#d0d4d8"></div><div class="abs" style="left:19.5px;top:34.2px;width:6px;height:1px;background:#b4b9bf"></div><div class="abs" style="left:31px;top:34.2px;width:30px;height:1px;background:#d0d4d8"></div><div class="abs" style="left:19.5px;top:37.8px;width:6px;height:1px;background:#b4b9bf"></div><div class="abs" style="left:31px;top:37.8px;width:14px;height:1px;background:#d0d4d8"></div><div class="abs" style="left:19.5px;top:41.4px;width:6px;height:1px;background:#b4b9bf"></div><div class="abs" style="left:31px;top:41.4px;width:8px;height:1px;background:#d0d4d8"></div><div class="abs" style="left:19.5px;top:45.0px;width:6px;height:1px;background:#b4b9bf"></div><div class="abs" style="left:31px;top:45.0px;width:6px;height:1px;background:#d0d4d8"></div><div class="abs" style="left:19.5px;top:48.6px;width:6px;height:1px;background:#b4b9bf"></div><div class="abs" style="left:31px;top:48.6px;width:20px;height:1px;background:#d0d4d8"></div><div class="abs" style="left:19.5px;top:52.2px;width:6px;height:1px;background:#b4b9bf"></div><div class="abs" style="left:31px;top:52.2px;width:10px;height:1px;background:#d0d4d8"></div><div class="abs" style="left:19.5px;top:55.8px;width:6px;height:1px;background:#b4b9bf"></div><div class="abs" style="left:31px;top:55.8px;width:12px;height:1px;background:#d0d4d8"></div></div></div>
<div class="clip c2" style="left:639.5px;width:105.5px"><div class="abs" style="left:7px;top:6px;width:81.5px;height:61px;background:#fdfdfd;filter:blur(.45px)"><div class="abs" style="left:0;top:0;width:16.5px;height:61px;background:#414a53"></div><div class="abs" style="left:2px;top:3px;width:8px;height:1.5px;background:#aab2ba"></div><div class="abs" style="left:2.5px;top:8.0px;width:7px;height:1px;background:#56606a"></div><div class="abs" style="left:2.5px;top:11.6px;width:8px;height:1px;background:#56606a"></div><div class="abs" style="left:2.5px;top:15.2px;width:9px;height:1px;background:#56606a"></div><div class="abs" style="left:2.5px;top:18.8px;width:7px;height:1px;background:#56606a"></div><div class="abs" style="left:2.5px;top:22.4px;width:8px;height:1px;background:#56606a"></div><div class="abs" style="left:2.5px;top:26.0px;width:9px;height:1px;background:#56606a"></div><div class="abs" style="left:2.5px;top:29.6px;width:7px;height:1px;background:#56606a"></div><div class="abs" style="left:18px;top:3px;width:14px;height:1.2px;background:#b9bec4"></div><div class="abs" style="left:19.5px;top:8px;width:5px;height:5px;border-radius:50%;background:#d4d9df"></div><div class="abs" style="left:26px;top:9px;width:12px;height:1.4px;background:#9aa0a7"></div><div class="abs" style="left:71px;top:21px;width:7px;height:3px;background:#58b460"></div><div class="abs" style="left:18px;top:17px;width:62px;height:1px;background:#e6e8ea"></div><div class="abs" style="left:19.5px;top:27.0px;width:6px;height:1px;background:#b4b9bf"></div><div class="abs" style="left:31px;top:27.0px;width:18px;height:1px;background:#d0d4d8"></div><div class="abs" style="left:19.5px;top:30.6px;width:6px;height:1px;background:#b4b9bf"></div><div class="abs" style="left:31px;top:30.6px;width:24px;height:1px;background:#d0d4d8"></div><div class="abs" style="left:19.5px;top:34.2px;width:6px;height:1px;background:#b4b9bf"></div><div class="abs" style="left:31px;top:34.2px;width:30px;height:1px;background:#d0d4d8"></div><div class="abs" style="left:19.5px;top:37.8px;width:6px;height:1px;background:#b4b9bf"></div><div class="abs" style="left:31px;top:37.8px;width:14px;height:1px;background:#d0d4d8"></div><div class="abs" style="left:19.5px;top:41.4px;width:6px;height:1px;background:#b4b9bf"></div><div class="abs" style="left:31px;top:41.4px;width:8px;height:1px;background:#d0d4d8"></div><div class="abs" style="left:19.5px;top:45.0px;width:6px;height:1px;background:#b4b9bf"></div><div class="abs" style="left:31px;top:45.0px;width:6px;height:1px;background:#d0d4d8"></div><div class="abs" style="left:19.5px;top:48.6px;width:6px;height:1px;background:#b4b9bf"></div><div class="abs" style="left:31px;top:48.6px;width:20px;height:1px;background:#d0d4d8"></div><div class="abs" style="left:19.5px;top:52.2px;width:6px;height:1px;background:#b4b9bf"></div><div class="abs" style="left:31px;top:52.2px;width:10px;height:1px;background:#d0d4d8"></div><div class="abs" style="left:19.5px;top:55.8px;width:6px;height:1px;background:#b4b9bf"></div><div class="abs" style="left:31px;top:55.8px;width:12px;height:1px;background:#d0d4d8"></div></div><svg class="abs" style="left:101.20000000000005px;top:26.5px" width="16" height="16" viewBox="0 0 16 16"><rect x="1" y="1" width="14" height="14" fill="none" stroke="#eef0f1" stroke-width="1.5"/><path d="M4.3 1 V15 M11.7 1 V15 M4.3 8 H11.7" stroke="#eef0f1" stroke-width="1.3"/><path d="M1 4.5 H4 M1 8 H4 M1 11.5 H4 M12 4.5 H15 M12 8 H15 M12 11.5 H15" stroke="#eef0f1" stroke-width="1.1"/></svg></div>
<div class="clip c2" style="left:747px;width:63.0px"><div class="abs" style="left:7px;top:6px;width:81.5px;height:61px;background:#fdfdfd;filter:blur(.45px)"><div class="abs" style="left:0;top:0;width:16.5px;height:61px;background:#414a53"></div><div class="abs" style="left:2px;top:3px;width:8px;height:1.5px;background:#aab2ba"></div><div class="abs" style="left:2.5px;top:8.0px;width:7px;height:1px;background:#56606a"></div><div class="abs" style="left:2.5px;top:11.6px;width:8px;height:1px;background:#56606a"></div><div class="abs" style="left:2.5px;top:15.2px;width:9px;height:1px;background:#56606a"></div><div class="abs" style="left:2.5px;top:18.8px;width:7px;height:1px;background:#56606a"></div><div class="abs" style="left:2.5px;top:22.4px;width:8px;height:1px;background:#56606a"></div><div class="abs" style="left:2.5px;top:26.0px;width:9px;height:1px;background:#56606a"></div><div class="abs" style="left:2.5px;top:29.6px;width:7px;height:1px;background:#56606a"></div><div class="abs" style="left:18px;top:3px;width:14px;height:1.2px;background:#b9bec4"></div><div class="abs" style="left:19.5px;top:8px;width:5px;height:5px;border-radius:50%;background:#d4d9df"></div><div class="abs" style="left:26px;top:9px;width:12px;height:1.4px;background:#9aa0a7"></div><div class="abs" style="left:71px;top:21px;width:7px;height:3px;background:#58b460"></div><div class="abs" style="left:18px;top:17px;width:62px;height:1px;background:#e6e8ea"></div><div class="abs" style="left:19.5px;top:27.0px;width:6px;height:1px;background:#b4b9bf"></div><div class="abs" style="left:31px;top:27.0px;width:18px;height:1px;background:#d0d4d8"></div><div class="abs" style="left:19.5px;top:30.6px;width:6px;height:1px;background:#b4b9bf"></div><div class="abs" style="left:31px;top:30.6px;width:24px;height:1px;background:#d0d4d8"></div><div class="abs" style="left:19.5px;top:34.2px;width:6px;height:1px;background:#b4b9bf"></div><div class="abs" style="left:31px;top:34.2px;width:30px;height:1px;background:#d0d4d8"></div><div class="abs" style="left:19.5px;top:37.8px;width:6px;height:1px;background:#b4b9bf"></div><div class="abs" style="left:31px;top:37.8px;width:14px;height:1px;background:#d0d4d8"></div><div class="abs" style="left:19.5px;top:41.4px;width:6px;height:1px;background:#b4b9bf"></div><div class="abs" style="left:31px;top:41.4px;width:8px;height:1px;background:#d0d4d8"></div><div class="abs" style="left:19.5px;top:45.0px;width:6px;height:1px;background:#b4b9bf"></div><div class="abs" style="left:31px;top:45.0px;width:6px;height:1px;background:#d0d4d8"></div><div class="abs" style="left:19.5px;top:48.6px;width:6px;height:1px;background:#b4b9bf"></div><div class="abs" style="left:31px;top:48.6px;width:20px;height:1px;background:#d0d4d8"></div><div class="abs" style="left:19.5px;top:52.2px;width:6px;height:1px;background:#b4b9bf"></div><div class="abs" style="left:31px;top:52.2px;width:10px;height:1px;background:#d0d4d8"></div><div class="abs" style="left:19.5px;top:55.8px;width:6px;height:1px;background:#b4b9bf"></div><div class="abs" style="left:31px;top:55.8px;width:12px;height:1px;background:#d0d4d8"></div></div></div>
<div class="clip c2" style="left:811.5px;width:17.0px"><div class="abs" style="left:7px;top:6px;width:81.5px;height:61px;background:#fdfdfd;filter:blur(.45px)"><div class="abs" style="left:0;top:0;width:16.5px;height:61px;background:#414a53"></div><div class="abs" style="left:2px;top:3px;width:8px;height:1.5px;background:#aab2ba"></div><div class="abs" style="left:2.5px;top:8.0px;width:7px;height:1px;background:#56606a"></div><div class="abs" style="left:2.5px;top:11.6px;width:8px;height:1px;background:#56606a"></div><div class="abs" style="left:2.5px;top:15.2px;width:9px;height:1px;background:#56606a"></div><div class="abs" style="left:2.5px;top:18.8px;width:7px;height:1px;background:#56606a"></div><div class="abs" style="left:2.5px;top:22.4px;width:8px;height:1px;background:#56606a"></div><div class="abs" style="left:2.5px;top:26.0px;width:9px;height:1px;background:#56606a"></div><div class="abs" style="left:2.5px;top:29.6px;width:7px;height:1px;background:#56606a"></div><div class="abs" style="left:18px;top:3px;width:14px;height:1.2px;background:#b9bec4"></div><div class="abs" style="left:19.5px;top:8px;width:5px;height:5px;border-radius:50%;background:#d4d9df"></div><div class="abs" style="left:26px;top:9px;width:12px;height:1.4px;background:#9aa0a7"></div><div class="abs" style="left:71px;top:21px;width:7px;height:3px;background:#58b460"></div><div class="abs" style="left:18px;top:17px;width:62px;height:1px;background:#e6e8ea"></div><div class="abs" style="left:19.5px;top:27.0px;width:6px;height:1px;background:#b4b9bf"></div><div class="abs" style="left:31px;top:27.0px;width:18px;height:1px;background:#d0d4d8"></div><div class="abs" style="left:19.5px;top:30.6px;width:6px;height:1px;background:#b4b9bf"></div><div class="abs" style="left:31px;top:30.6px;width:24px;height:1px;background:#d0d4d8"></div><div class="abs" style="left:19.5px;top:34.2px;width:6px;height:1px;background:#b4b9bf"></div><div class="abs" style="left:31px;top:34.2px;width:30px;height:1px;background:#d0d4d8"></div><div class="abs" style="left:19.5px;top:37.8px;width:6px;height:1px;background:#b4b9bf"></div><div class="abs" style="left:31px;top:37.8px;width:14px;height:1px;background:#d0d4d8"></div><div class="abs" style="left:19.5px;top:41.4px;width:6px;height:1px;background:#b4b9bf"></div><div class="abs" style="left:31px;top:41.4px;width:8px;height:1px;background:#d0d4d8"></div><div class="abs" style="left:19.5px;top:45.0px;width:6px;height:1px;background:#b4b9bf"></div><div class="abs" style="left:31px;top:45.0px;width:6px;height:1px;background:#d0d4d8"></div><div class="abs" style="left:19.5px;top:48.6px;width:6px;height:1px;background:#b4b9bf"></div><div class="abs" style="left:31px;top:48.6px;width:20px;height:1px;background:#d0d4d8"></div><div class="abs" style="left:19.5px;top:52.2px;width:6px;height:1px;background:#b4b9bf"></div><div class="abs" style="left:31px;top:52.2px;width:10px;height:1px;background:#d0d4d8"></div><div class="abs" style="left:19.5px;top:55.8px;width:6px;height:1px;background:#b4b9bf"></div><div class="abs" style="left:31px;top:55.8px;width:12px;height:1px;background:#d0d4d8"></div></div></div>
<div class="clip c2" style="left:830.5px;width:98.5px"><div class="abs" style="left:7px;top:6px;width:81.5px;height:61px;background:#fdfdfd;filter:blur(.45px)"><div class="abs" style="left:0;top:0;width:16.5px;height:61px;background:#414a53"></div><div class="abs" style="left:2px;top:3px;width:8px;height:1.5px;background:#aab2ba"></div><div class="abs" style="left:2.5px;top:8.0px;width:7px;height:1px;background:#56606a"></div><div class="abs" style="left:2.5px;top:11.6px;width:8px;height:1px;background:#56606a"></div><div class="abs" style="left:2.5px;top:15.2px;width:9px;height:1px;background:#56606a"></div><div class="abs" style="left:2.5px;top:18.8px;width:7px;height:1px;background:#56606a"></div><div class="abs" style="left:2.5px;top:22.4px;width:8px;height:1px;background:#56606a"></div><div class="abs" style="left:2.5px;top:26.0px;width:9px;height:1px;background:#56606a"></div><div class="abs" style="left:2.5px;top:29.6px;width:7px;height:1px;background:#56606a"></div><div class="abs" style="left:18px;top:3px;width:14px;height:1.2px;background:#b9bec4"></div><div class="abs" style="left:19.5px;top:8px;width:5px;height:5px;border-radius:50%;background:#d4d9df"></div><div class="abs" style="left:26px;top:9px;width:12px;height:1.4px;background:#9aa0a7"></div><div class="abs" style="left:71px;top:21px;width:7px;height:3px;background:#58b460"></div><div class="abs" style="left:18px;top:17px;width:62px;height:1px;background:#e6e8ea"></div><div class="abs" style="left:19.5px;top:27.0px;width:6px;height:1px;background:#b4b9bf"></div><div class="abs" style="left:31px;top:27.0px;width:18px;height:1px;background:#d0d4d8"></div><div class="abs" style="left:19.5px;top:30.6px;width:6px;height:1px;background:#b4b9bf"></div><div class="abs" style="left:31px;top:30.6px;width:24px;height:1px;background:#d0d4d8"></div><div class="abs" style="left:19.5px;top:34.2px;width:6px;height:1px;background:#b4b9bf"></div><div class="abs" style="left:31px;top:34.2px;width:30px;height:1px;background:#d0d4d8"></div><div class="abs" style="left:19.5px;top:37.8px;width:6px;height:1px;background:#b4b9bf"></div><div class="abs" style="left:31px;top:37.8px;width:14px;height:1px;background:#d0d4d8"></div><div class="abs" style="left:19.5px;top:41.4px;width:6px;height:1px;background:#b4b9bf"></div><div class="abs" style="left:31px;top:41.4px;width:8px;height:1px;background:#d0d4d8"></div><div class="abs" style="left:19.5px;top:45.0px;width:6px;height:1px;background:#b4b9bf"></div><div class="abs" style="left:31px;top:45.0px;width:6px;height:1px;background:#d0d4d8"></div><div class="abs" style="left:19.5px;top:48.6px;width:6px;height:1px;background:#b4b9bf"></div><div class="abs" style="left:31px;top:48.6px;width:20px;height:1px;background:#d0d4d8"></div><div class="abs" style="left:19.5px;top:52.2px;width:6px;height:1px;background:#b4b9bf"></div><div class="abs" style="left:31px;top:52.2px;width:10px;height:1px;background:#d0d4d8"></div><div class="abs" style="left:19.5px;top:55.8px;width:6px;height:1px;background:#b4b9bf"></div><div class="abs" style="left:31px;top:55.8px;width:12px;height:1px;background:#d0d4d8"></div></div></div>
<div class="clip c2" style="left:930.5px;width:18.0px"><div class="abs" style="left:7px;top:6px;width:81.5px;height:61px;background:#fdfdfd;filter:blur(.45px)"><div class="abs" style="left:0;top:0;width:16.5px;height:61px;background:#414a53"></div><div class="abs" style="left:2px;top:3px;width:8px;height:1.5px;background:#aab2ba"></div><div class="abs" style="left:2.5px;top:8.0px;width:7px;height:1px;background:#56606a"></div><div class="abs" style="left:2.5px;top:11.6px;width:8px;height:1px;background:#56606a"></div><div class="abs" style="left:2.5px;top:15.2px;width:9px;height:1px;background:#56606a"></div><div class="abs" style="left:2.5px;top:18.8px;width:7px;height:1px;background:#56606a"></div><div class="abs" style="left:2.5px;top:22.4px;width:8px;height:1px;background:#56606a"></div><div class="abs" style="left:2.5px;top:26.0px;width:9px;height:1px;background:#56606a"></div><div class="abs" style="left:2.5px;top:29.6px;width:7px;height:1px;background:#56606a"></div><div class="abs" style="left:18px;top:3px;width:10px;height:1.2px;background:#b9bec4"></div><div class="abs" style="left:19px;top:8px;width:3px;height:3px;border-radius:50%;background:#d9d37a"></div><div class="abs" style="left:24px;top:9px;width:12px;height:1px;background:#c4c8cd"></div><div class="abs" style="left:50px;top:8px;width:3px;height:3px;border-radius:50%;background:#d9d37a"></div><div class="abs" style="left:55px;top:9px;width:12px;height:1px;background:#c4c8cd"></div><div class="abs" style="left:19px;top:13px;width:3px;height:3px;border-radius:50%;background:#d9d37a"></div><div class="abs" style="left:24px;top:14px;width:12px;height:1px;background:#c4c8cd"></div><div class="abs" style="left:50px;top:13px;width:3px;height:3px;border-radius:50%;background:#d9d37a"></div><div class="abs" style="left:55px;top:14px;width:12px;height:1px;background:#c4c8cd"></div><div class="abs" style="left:19px;top:22px;width:24px;height:1px;background:#d6d9dd"></div><div class="abs" style="left:30px;top:27px;width:10px;height:1px;background:#e2e4e7"></div><div class="abs" style="left:50px;top:22px;width:24px;height:1px;background:#d6d9dd"></div><div class="abs" style="left:61px;top:27px;width:10px;height:1px;background:#e2e4e7"></div><div class="abs" style="left:19px;top:33px;width:24px;height:1px;background:#d6d9dd"></div><div class="abs" style="left:30px;top:38px;width:10px;height:1px;background:#e2e4e7"></div><div class="abs" style="left:50px;top:33px;width:24px;height:1px;background:#d6d9dd"></div><div class="abs" style="left:61px;top:38px;width:10px;height:1px;background:#e2e4e7"></div><div class="abs" style="left:19px;top:44px;width:24px;height:1px;background:#d6d9dd"></div><div class="abs" style="left:30px;top:49px;width:10px;height:1px;background:#e2e4e7"></div><div class="abs" style="left:50px;top:44px;width:24px;height:1px;background:#d6d9dd"></div><div class="abs" style="left:61px;top:49px;width:10px;height:1px;background:#e2e4e7"></div><div class="abs" style="left:0;top:59px;width:16.5px;height:2px;background:#cfd6dd"></div></div></div>
<div class="clip c2" style="left:950px;width:65.5px"><div class="abs" style="left:7px;top:6px;width:81.5px;height:61px;background:#fdfdfd;filter:blur(.45px)"><div class="abs" style="left:0;top:0;width:16.5px;height:61px;background:#414a53"></div><div class="abs" style="left:2px;top:3px;width:8px;height:1.5px;background:#aab2ba"></div><div class="abs" style="left:2.5px;top:8.0px;width:7px;height:1px;background:#56606a"></div><div class="abs" style="left:2.5px;top:11.6px;width:8px;height:1px;background:#56606a"></div><div class="abs" style="left:2.5px;top:15.2px;width:9px;height:1px;background:#56606a"></div><div class="abs" style="left:2.5px;top:18.8px;width:7px;height:1px;background:#56606a"></div><div class="abs" style="left:2.5px;top:22.4px;width:8px;height:1px;background:#56606a"></div><div class="abs" style="left:2.5px;top:26.0px;width:9px;height:1px;background:#56606a"></div><div class="abs" style="left:2.5px;top:29.6px;width:7px;height:1px;background:#56606a"></div><div class="abs" style="left:18px;top:3px;width:14px;height:1.2px;background:#b9bec4"></div><div class="abs" style="left:19.5px;top:8px;width:5px;height:5px;border-radius:50%;background:#d4d9df"></div><div class="abs" style="left:26px;top:9px;width:12px;height:1.4px;background:#9aa0a7"></div><div class="abs" style="left:71px;top:21px;width:7px;height:3px;background:#58b460"></div><div class="abs" style="left:18px;top:17px;width:62px;height:1px;background:#e6e8ea"></div><div class="abs" style="left:19.5px;top:27.0px;width:6px;height:1px;background:#b4b9bf"></div><div class="abs" style="left:31px;top:27.0px;width:18px;height:1px;background:#d0d4d8"></div><div class="abs" style="left:19.5px;top:30.6px;width:6px;height:1px;background:#b4b9bf"></div><div class="abs" style="left:31px;top:30.6px;width:24px;height:1px;background:#d0d4d8"></div><div class="abs" style="left:19.5px;top:34.2px;width:6px;height:1px;background:#b4b9bf"></div><div class="abs" style="left:31px;top:34.2px;width:30px;height:1px;background:#d0d4d8"></div><div class="abs" style="left:19.5px;top:37.8px;width:6px;height:1px;background:#b4b9bf"></div><div class="abs" style="left:31px;top:37.8px;width:14px;height:1px;background:#d0d4d8"></div><div class="abs" style="left:19.5px;top:41.4px;width:6px;height:1px;background:#b4b9bf"></div><div class="abs" style="left:31px;top:41.4px;width:8px;height:1px;background:#d0d4d8"></div><div class="abs" style="left:19.5px;top:45.0px;width:6px;height:1px;background:#b4b9bf"></div><div class="abs" style="left:31px;top:45.0px;width:6px;height:1px;background:#d0d4d8"></div><div class="abs" style="left:19.5px;top:48.6px;width:6px;height:1px;background:#b4b9bf"></div><div class="abs" style="left:31px;top:48.6px;width:20px;height:1px;background:#d0d4d8"></div><div class="abs" style="left:19.5px;top:52.2px;width:6px;height:1px;background:#b4b9bf"></div><div class="abs" style="left:31px;top:52.2px;width:10px;height:1px;background:#d0d4d8"></div><div class="abs" style="left:19.5px;top:55.8px;width:6px;height:1px;background:#b4b9bf"></div><div class="abs" style="left:31px;top:55.8px;width:12px;height:1px;background:#d0d4d8"></div></div></div>
<div class="clip c2" style="left:1017px;width:63.0px"><div class="abs" style="left:7px;top:6px;width:81.5px;height:61px;background:#fdfdfd;filter:blur(.45px)"><div class="abs" style="left:0;top:0;width:16.5px;height:61px;background:#414a53"></div><div class="abs" style="left:2px;top:3px;width:8px;height:1.5px;background:#aab2ba"></div><div class="abs" style="left:2.5px;top:8.0px;width:7px;height:1px;background:#56606a"></div><div class="abs" style="left:2.5px;top:11.6px;width:8px;height:1px;background:#56606a"></div><div class="abs" style="left:2.5px;top:15.2px;width:9px;height:1px;background:#56606a"></div><div class="abs" style="left:2.5px;top:18.8px;width:7px;height:1px;background:#56606a"></div><div class="abs" style="left:2.5px;top:22.4px;width:8px;height:1px;background:#56606a"></div><div class="abs" style="left:2.5px;top:26.0px;width:9px;height:1px;background:#56606a"></div><div class="abs" style="left:2.5px;top:29.6px;width:7px;height:1px;background:#56606a"></div><div class="abs" style="left:18px;top:3px;width:10px;height:1.2px;background:#b9bec4"></div><div class="abs" style="left:70px;top:7px;width:8px;height:3px;background:#58b460"></div><div class="abs" style="left:18px;top:13px;width:62px;height:2px;background:#eceef0"></div><div class="abs" style="left:36px;top:24px;width:9px;height:8px;background:#dfe8f5"></div><div class="abs" style="left:18px;top:22px;width:62px;height:1px;background:#f0f1f3"></div><div class="abs" style="left:18px;top:30px;width:62px;height:1px;background:#f0f1f3"></div><div class="abs" style="left:18px;top:38px;width:62px;height:1px;background:#f0f1f3"></div><div class="abs" style="left:18px;top:46px;width:62px;height:1px;background:#f0f1f3"></div><div class="abs" style="left:18px;top:54px;width:62px;height:1px;background:#f0f1f3"></div></div></div>
<div class="clip c2" style="left:1081.5px;width:182.0px"><div class="abs" style="left:7px;top:6px;width:81.5px;height:61px;background:#fdfdfd;filter:blur(.45px)"><div class="abs" style="left:0;top:0;width:16.5px;height:61px;background:#414a53"></div><div class="abs" style="left:2px;top:3px;width:8px;height:1.5px;background:#aab2ba"></div><div class="abs" style="left:2.5px;top:8.0px;width:7px;height:1px;background:#56606a"></div><div class="abs" style="left:2.5px;top:11.6px;width:8px;height:1px;background:#56606a"></div><div class="abs" style="left:2.5px;top:15.2px;width:9px;height:1px;background:#56606a"></div><div class="abs" style="left:2.5px;top:18.8px;width:7px;height:1px;background:#56606a"></div><div class="abs" style="left:2.5px;top:22.4px;width:8px;height:1px;background:#56606a"></div><div class="abs" style="left:2.5px;top:26.0px;width:9px;height:1px;background:#56606a"></div><div class="abs" style="left:2.5px;top:29.6px;width:7px;height:1px;background:#56606a"></div><div class="abs" style="left:18px;top:3px;width:10px;height:1.2px;background:#b9bec4"></div><div class="abs" style="left:70px;top:7px;width:8px;height:3px;background:#58b460"></div><div class="abs" style="left:18px;top:13px;width:62px;height:2px;background:#eceef0"></div><div class="abs" style="left:36px;top:24px;width:9px;height:8px;background:#dfe8f5"></div><div class="abs" style="left:18px;top:22px;width:62px;height:1px;background:#f0f1f3"></div><div class="abs" style="left:18px;top:30px;width:62px;height:1px;background:#f0f1f3"></div><div class="abs" style="left:18px;top:38px;width:62px;height:1px;background:#f0f1f3"></div><div class="abs" style="left:18px;top:46px;width:62px;height:1px;background:#f0f1f3"></div><div class="abs" style="left:18px;top:54px;width:62px;height:1px;background:#f0f1f3"></div></div><svg class="abs" style="left:100.20000000000005px;top:26.5px" width="16" height="16" viewBox="0 0 16 16"><rect x="1" y="1" width="14" height="14" fill="none" stroke="#eef0f1" stroke-width="1.5"/><path d="M4.3 1 V15 M11.7 1 V15 M4.3 8 H11.7" stroke="#eef0f1" stroke-width="1.3"/><path d="M1 4.5 H4 M1 8 H4 M1 11.5 H4 M12 4.5 H15 M12 8 H15 M12 11.5 H15" stroke="#eef0f1" stroke-width="1.1"/></svg><span class="cn" style="left:124.79999999999995px;top:29.6px">Recording</span></div>
<div class="abs" style="left:491.2px;top:24px;width:1.9px;height:154px;background:#d4d5d6"></div>
<svg class="abs" style="left:484px;top:12px" width="15" height="15" viewBox="0 0 15 15"><path d="M.6 5 Q.6 .6 4.6 .6 H10.2 Q14.2 .6 14.2 5 Q14.2 9.4 7.4 14.2 Q.6 9.4 .6 5Z" fill="#cfd0d1"/></svg>
</div>
</body>
</html>
